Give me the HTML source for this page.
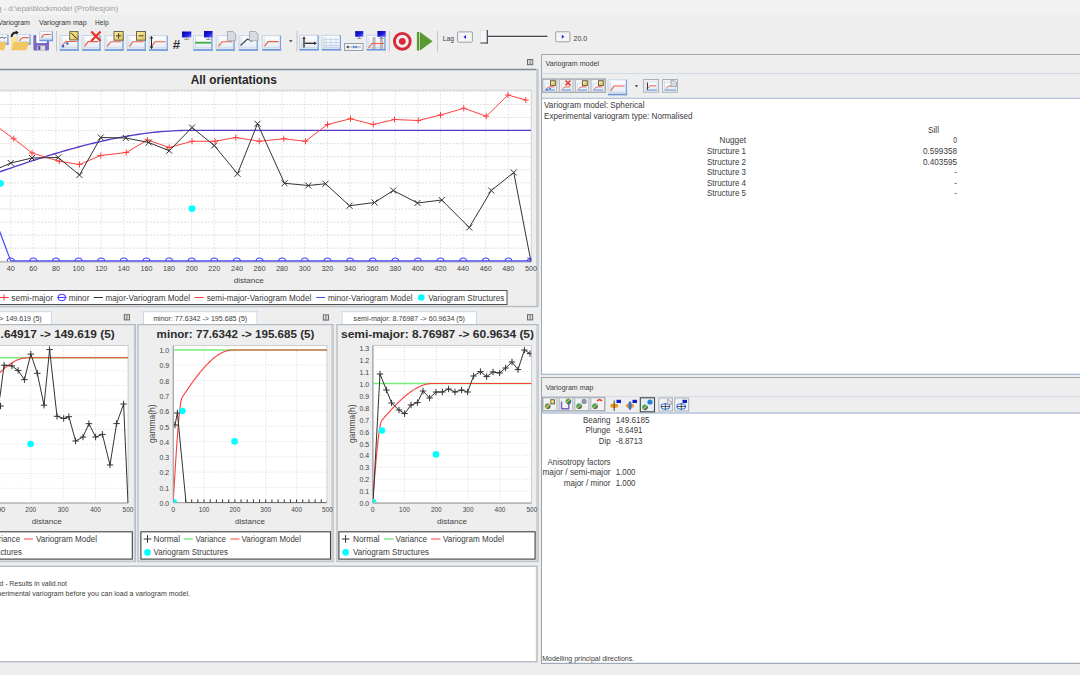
<!DOCTYPE html>
<html><head><meta charset="utf-8"><style>
html,body{margin:0;padding:0;background:#eeeeee;overflow:hidden}
svg{display:block;font-family:"Liberation Sans",sans-serif}
</style></head><body>
<svg width="1080" height="675" viewBox="0 0 1080 675">
<defs>
<linearGradient id="gbox" x1="0" y1="0" x2="0" y2="1"><stop offset="0" stop-color="#ffffff"/><stop offset="1" stop-color="#dfe8f6"/></linearGradient>
<linearGradient id="gtag" x1="0" y1="0" x2="1" y2="1"><stop offset="0" stop-color="#fff2a0"/><stop offset="1" stop-color="#e0c050"/></linearGradient>
<linearGradient id="gmon" x1="0" y1="0" x2="1" y2="1"><stop offset="0" stop-color="#0000a0"/><stop offset="0.6" stop-color="#2020e0"/><stop offset="1" stop-color="#8080ff"/></linearGradient>
<linearGradient id="gball" x1="0" y1="0" x2="1" y2="1">
<stop offset="0" stop-color="#e08040"/><stop offset="0.2" stop-color="#e08040"/><stop offset="0.2" stop-color="#30b070"/><stop offset="0.4" stop-color="#30b070"/><stop offset="0.4" stop-color="#d0a040"/><stop offset="0.6" stop-color="#d0a040"/><stop offset="0.6" stop-color="#208070"/><stop offset="0.8" stop-color="#208070"/><stop offset="0.8" stop-color="#c07050"/></linearGradient>
<clipPath id="c1"><rect x="-20" y="90.8" width="551.5" height="171"/></clipPath><clipPath id="c2"><rect x="-40" y="345.6" width="168.6" height="158"/></clipPath><clipPath id="c3"><rect x="173.6" y="345.6" width="153.4" height="157"/></clipPath><clipPath id="c4"><rect x="373" y="345.6" width="158.4" height="157"/></clipPath></defs>
<rect x="0.00" y="0.00" width="1080.00" height="675.00" fill="#eeeeee" stroke="none" stroke-width="1" />
<rect x="0.00" y="0.00" width="1080.00" height="15.00" fill="#f2f2f2" stroke="none" stroke-width="1" />
<text x="-3.00" y="10.80" font-size="8" fill="#9c9c9c" font-weight="normal" text-anchor="start" textLength="121.00" lengthAdjust="spacingAndGlyphs" >g - d:\epa\blockmodel (Profilesjoin)</text>
<text x="-2.00" y="24.80" font-size="7.4" fill="#3a3a3a" font-weight="normal" text-anchor="start" textLength="32.00" lengthAdjust="spacingAndGlyphs" >Variogram</text>
<text x="39.00" y="24.80" font-size="7.4" fill="#3a3a3a" font-weight="normal" text-anchor="start" textLength="47.60" lengthAdjust="spacingAndGlyphs" >Variogram map</text>
<text x="95.00" y="24.80" font-size="7.4" fill="#3a3a3a" font-weight="normal" text-anchor="start" textLength="13.60" lengthAdjust="spacingAndGlyphs" >Help</text>
<rect x="-11.50" y="34.70" width="19.60" height="9.40" fill="url(#gbox)" stroke="#c4d2e6" stroke-width="1" />
<line x1="-11.50" y1="43.80" x2="8.60" y2="43.80" stroke="#6c98d8" stroke-width="1.6" />
<line x1="7.80" y1="34.70" x2="7.80" y2="44.60" stroke="#7aa2dc" stroke-width="1.2" />
<line x1="-9.50" y1="36.20" x2="-9.50" y2="41.60" stroke="#c8d0dc" stroke-width="0.7" />
<line x1="-9.50" y1="41.60" x2="6.60" y2="41.60" stroke="#c8d0dc" stroke-width="0.7" />
<polyline points="0.00,38.00 2.00,37.00 4.00,38.30 6.00,37.20" fill="none" stroke="#666" stroke-width="1" stroke-linejoin="round" />
<polygon points="-10.00,42.00 6.70,42.00 4.00,50.30 -10.00,50.30" fill="#f3c665" stroke="none" stroke-width="1" />
<polygon points="11.10,36.80 17.10,36.80 17.10,50.30 11.10,50.30" fill="#fbe49a" stroke="none" stroke-width="1" />
<rect x="17.60" y="34.70" width="12.70" height="9.40" fill="url(#gbox)" stroke="#c4d2e6" stroke-width="1" />
<line x1="17.60" y1="43.80" x2="30.80" y2="43.80" stroke="#6c98d8" stroke-width="1.6" />
<line x1="30.00" y1="34.70" x2="30.00" y2="44.60" stroke="#7aa2dc" stroke-width="1.2" />
<line x1="19.60" y1="36.20" x2="19.60" y2="41.60" stroke="#c8d0dc" stroke-width="0.7" />
<line x1="19.60" y1="41.60" x2="28.80" y2="41.60" stroke="#c8d0dc" stroke-width="0.7" />
<polyline points="19.20,41.00 22.30,37.60 28.80,37.60" fill="none" stroke="#f06040" stroke-width="1.1" stroke-linejoin="round" />
<polygon points="13.00,42.00 29.00,42.00 26.50,50.30 11.60,50.30" fill="#f3c665" stroke="none" stroke-width="1" />
<path d="M11.5,37 Q12,32.5 16.5,32.5" fill="none" stroke="#222" stroke-width="2"/>
<polygon points="15.80,30.60 18.80,32.60 15.80,34.80" fill="#222" stroke="none" stroke-width="1" />
<rect x="33.40" y="35.00" width="15.60" height="15.50" fill="#7b68c0" stroke="none" stroke-width="1" rx="1"/>
<rect x="36.30" y="35.00" width="10.40" height="8.00" fill="#ffffff" stroke="none" stroke-width="1" />
<rect x="37.30" y="45.60" width="7.80" height="4.90" fill="#dcdcdc" stroke="none" stroke-width="1" />
<rect x="38.30" y="46.00" width="2.00" height="4.00" fill="#5a48a0" stroke="none" stroke-width="1" />
<rect x="39.60" y="31.60" width="13.00" height="9.10" fill="url(#gbox)" stroke="#c4d2e6" stroke-width="1" />
<line x1="39.60" y1="40.40" x2="53.10" y2="40.40" stroke="#6c98d8" stroke-width="1.6" />
<line x1="52.30" y1="31.60" x2="52.30" y2="41.20" stroke="#7aa2dc" stroke-width="1.2" />
<line x1="41.60" y1="33.10" x2="41.60" y2="38.20" stroke="#c8d0dc" stroke-width="0.7" />
<line x1="41.60" y1="38.20" x2="51.10" y2="38.20" stroke="#c8d0dc" stroke-width="0.7" />
<polyline points="41.50,37.80 44.00,34.50 51.00,34.50" fill="none" stroke="#f06040" stroke-width="1.1" stroke-linejoin="round" />
<line x1="56.50" y1="31.00" x2="56.50" y2="51.50" stroke="#c4c4c4" stroke-width="1" />
<rect x="59.90" y="35.50" width="18.40" height="14.80" fill="url(#gbox)" stroke="#c4d2e6" stroke-width="1" />
<line x1="59.90" y1="50.00" x2="78.80" y2="50.00" stroke="#6c98d8" stroke-width="1.6" />
<line x1="78.00" y1="35.50" x2="78.00" y2="50.80" stroke="#7aa2dc" stroke-width="1.2" />
<line x1="61.90" y1="37.00" x2="61.90" y2="47.80" stroke="#c8d0dc" stroke-width="0.7" />
<line x1="61.90" y1="47.80" x2="76.80" y2="47.80" stroke="#c8d0dc" stroke-width="0.7" />
<polyline points="62.20,45.60 65.80,41.50 76.70,41.50" fill="none" stroke="#f06040" stroke-width="1.1" stroke-linejoin="round" />
<circle cx="63.00" cy="46.20" r="1.20" fill="#2060d0" stroke="none" stroke-width="1" />
<circle cx="67.30" cy="43.50" r="1.20" fill="#2060d0" stroke="none" stroke-width="1" />
<rect x="69.70" y="31.60" width="8.30" height="8.30" fill="url(#gtag)" stroke="#6a6450" stroke-width="1" />
<line x1="71.00" y1="32.80" x2="76.80" y2="38.60" stroke="#222" stroke-width="1" />
<rect x="82.20" y="35.50" width="18.10" height="14.80" fill="url(#gbox)" stroke="#c4d2e6" stroke-width="1" />
<line x1="82.20" y1="50.00" x2="100.80" y2="50.00" stroke="#6c98d8" stroke-width="1.6" />
<line x1="100.00" y1="35.50" x2="100.00" y2="50.80" stroke="#7aa2dc" stroke-width="1.2" />
<line x1="84.20" y1="37.00" x2="84.20" y2="47.80" stroke="#c8d0dc" stroke-width="0.7" />
<line x1="84.20" y1="47.80" x2="98.80" y2="47.80" stroke="#c8d0dc" stroke-width="0.7" />
<polyline points="84.70,46.30 88.00,41.64 98.30,41.64" fill="none" stroke="#f06040" stroke-width="1.2" stroke-linejoin="round" />
<line x1="91.30" y1="31.60" x2="100.60" y2="41.00" stroke="#e83020" stroke-width="2.2" />
<line x1="100.60" y1="31.60" x2="91.30" y2="41.00" stroke="#e83020" stroke-width="2.2" />
<rect x="104.80" y="35.70" width="18.40" height="14.60" fill="url(#gbox)" stroke="#c4d2e6" stroke-width="1" />
<line x1="104.80" y1="50.00" x2="123.70" y2="50.00" stroke="#6c98d8" stroke-width="1.6" />
<line x1="122.90" y1="35.70" x2="122.90" y2="50.80" stroke="#7aa2dc" stroke-width="1.2" />
<line x1="106.80" y1="37.20" x2="106.80" y2="47.80" stroke="#c8d0dc" stroke-width="0.7" />
<line x1="106.80" y1="47.80" x2="121.70" y2="47.80" stroke="#c8d0dc" stroke-width="0.7" />
<polyline points="107.30,46.30 110.70,41.75 121.20,41.75" fill="none" stroke="#f06040" stroke-width="1.2" stroke-linejoin="round" />
<rect x="114.00" y="31.50" width="9.20" height="8.70" fill="url(#gtag)" stroke="#6a6450" stroke-width="1" />
<line x1="116.00" y1="35.80" x2="121.20" y2="35.80" stroke="#333" stroke-width="0.9" />
<line x1="118.60" y1="33.20" x2="118.60" y2="38.50" stroke="#333" stroke-width="0.9" />
<rect x="127.00" y="35.70" width="18.50" height="14.60" fill="url(#gbox)" stroke="#c4d2e6" stroke-width="1" />
<line x1="127.00" y1="50.00" x2="146.00" y2="50.00" stroke="#6c98d8" stroke-width="1.6" />
<line x1="145.20" y1="35.70" x2="145.20" y2="50.80" stroke="#7aa2dc" stroke-width="1.2" />
<line x1="129.00" y1="37.20" x2="129.00" y2="47.80" stroke="#c8d0dc" stroke-width="0.7" />
<line x1="129.00" y1="47.80" x2="144.00" y2="47.80" stroke="#c8d0dc" stroke-width="0.7" />
<polyline points="129.50,46.30 132.94,41.75 143.50,41.75" fill="none" stroke="#f06040" stroke-width="1.2" stroke-linejoin="round" />
<rect x="136.50" y="31.50" width="9.00" height="8.70" fill="url(#gtag)" stroke="#6a6450" stroke-width="1" />
<line x1="138.50" y1="35.80" x2="143.50" y2="35.80" stroke="#333" stroke-width="0.9" />
<rect x="149.20" y="35.70" width="18.30" height="14.60" fill="url(#gbox)" stroke="#c4d2e6" stroke-width="1" />
<line x1="149.20" y1="50.00" x2="168.00" y2="50.00" stroke="#6c98d8" stroke-width="1.6" />
<line x1="167.20" y1="35.70" x2="167.20" y2="50.80" stroke="#7aa2dc" stroke-width="1.2" />
<line x1="151.20" y1="37.20" x2="151.20" y2="47.80" stroke="#c8d0dc" stroke-width="0.7" />
<line x1="151.20" y1="47.80" x2="166.00" y2="47.80" stroke="#c8d0dc" stroke-width="0.7" />
<polyline points="151.70,46.30 155.07,41.75 165.50,41.75" fill="none" stroke="#f06040" stroke-width="1.2" stroke-linejoin="round" />
<line x1="151.50" y1="36.50" x2="151.50" y2="48.50" stroke="#222" stroke-width="1" />
<polygon points="149.80,38.50 151.50,36.00 153.20,38.50" fill="#222" stroke="none" stroke-width="1" />
<polygon points="149.80,46.50 151.50,49.00 153.20,46.50" fill="#222" stroke="none" stroke-width="1" />
<text x="172.80" y="49.20" font-size="13.5" fill="#333" font-weight="bold" text-anchor="start" textLength="7.40" lengthAdjust="spacingAndGlyphs" >#</text>
<rect x="182.00" y="31.50" width="9.30" height="5.98" fill="url(#gmon)" stroke="none" stroke-width="1" />
<line x1="186.65" y1="37.48" x2="186.65" y2="39.30" stroke="#888" stroke-width="1" />
<line x1="184.00" y1="39.30" x2="189.30" y2="39.30" stroke="#999" stroke-width="1" />
<rect x="193.50" y="35.70" width="18.60" height="14.60" fill="url(#gbox)" stroke="#c4d2e6" stroke-width="1" />
<line x1="193.50" y1="50.00" x2="212.60" y2="50.00" stroke="#6c98d8" stroke-width="1.6" />
<line x1="211.80" y1="35.70" x2="211.80" y2="50.80" stroke="#7aa2dc" stroke-width="1.2" />
<line x1="195.50" y1="37.20" x2="195.50" y2="47.80" stroke="#c8d0dc" stroke-width="0.7" />
<line x1="195.50" y1="47.80" x2="210.60" y2="47.80" stroke="#c8d0dc" stroke-width="0.7" />
<line x1="195.00" y1="42.70" x2="211.00" y2="42.70" stroke="#40b040" stroke-width="1.8" />
<rect x="204.00" y="31.00" width="8.60" height="6.48" fill="url(#gmon)" stroke="none" stroke-width="1" />
<line x1="208.30" y1="37.48" x2="208.30" y2="39.50" stroke="#888" stroke-width="1" />
<line x1="206.00" y1="39.50" x2="210.60" y2="39.50" stroke="#999" stroke-width="1" />
<rect x="216.20" y="35.70" width="18.10" height="14.60" fill="url(#gbox)" stroke="#c4d2e6" stroke-width="1" />
<line x1="216.20" y1="50.00" x2="234.80" y2="50.00" stroke="#6c98d8" stroke-width="1.6" />
<line x1="234.00" y1="35.70" x2="234.00" y2="50.80" stroke="#7aa2dc" stroke-width="1.2" />
<line x1="218.20" y1="37.20" x2="218.20" y2="47.80" stroke="#c8d0dc" stroke-width="0.7" />
<line x1="218.20" y1="47.80" x2="232.80" y2="47.80" stroke="#c8d0dc" stroke-width="0.7" />
<polyline points="218.70,46.30 222.00,41.75 232.30,41.75" fill="none" stroke="#f06040" stroke-width="1.2" stroke-linejoin="round" />
<polygon points="227.40,31.50 233.20,31.50 235.70,34.00 235.70,40.70 227.40,40.70" fill="#d8dce2" stroke="#9aa0a8" stroke-width="0.8" />
<rect x="239.00" y="35.70" width="18.50" height="14.60" fill="url(#gbox)" stroke="#c4d2e6" stroke-width="1" />
<line x1="239.00" y1="50.00" x2="258.00" y2="50.00" stroke="#6c98d8" stroke-width="1.6" />
<line x1="257.20" y1="35.70" x2="257.20" y2="50.80" stroke="#7aa2dc" stroke-width="1.2" />
<line x1="241.00" y1="37.20" x2="241.00" y2="47.80" stroke="#c8d0dc" stroke-width="0.7" />
<line x1="241.00" y1="47.80" x2="256.00" y2="47.80" stroke="#c8d0dc" stroke-width="0.7" />
<polyline points="240.50,45.50 247.50,39.00 252.00,41.50" fill="none" stroke="#444" stroke-width="1.1" stroke-linejoin="round" />
<polygon points="249.60,31.50 255.50,31.50 258.00,34.00 258.00,40.70 249.60,40.70" fill="#d8dce2" stroke="#9aa0a8" stroke-width="0.8" />
<rect x="262.20" y="35.70" width="18.50" height="14.40" fill="url(#gbox)" stroke="#c4d2e6" stroke-width="1" />
<line x1="262.20" y1="49.80" x2="281.20" y2="49.80" stroke="#6c98d8" stroke-width="1.6" />
<line x1="280.40" y1="35.70" x2="280.40" y2="50.60" stroke="#7aa2dc" stroke-width="1.2" />
<line x1="264.20" y1="37.20" x2="264.20" y2="47.60" stroke="#c8d0dc" stroke-width="0.7" />
<line x1="264.20" y1="47.60" x2="279.20" y2="47.60" stroke="#c8d0dc" stroke-width="0.7" />
<polyline points="264.70,46.10 268.13,41.67 278.70,41.67" fill="none" stroke="#f06040" stroke-width="1.2" stroke-linejoin="round" />
<polygon points="289.00,40.30 292.60,40.30 290.80,42.30" fill="#333" stroke="none" stroke-width="1" />
<line x1="297.00" y1="31.00" x2="297.00" y2="51.50" stroke="#c4c4c4" stroke-width="1" />
<rect x="299.70" y="35.30" width="18.70" height="14.70" fill="url(#gbox)" stroke="#c4d2e6" stroke-width="1" />
<line x1="299.70" y1="49.70" x2="318.90" y2="49.70" stroke="#6c98d8" stroke-width="1.6" />
<line x1="318.10" y1="35.30" x2="318.10" y2="50.50" stroke="#7aa2dc" stroke-width="1.2" />
<line x1="301.70" y1="36.80" x2="301.70" y2="47.50" stroke="#c8d0dc" stroke-width="0.7" />
<line x1="301.70" y1="47.50" x2="316.90" y2="47.50" stroke="#c8d0dc" stroke-width="0.7" />
<line x1="304.00" y1="38.00" x2="304.00" y2="47.50" stroke="#333" stroke-width="1.4" />
<polygon points="302.30,39.00 304.00,36.20 305.70,39.00" fill="#333" stroke="none" stroke-width="1" />
<line x1="305.00" y1="43.30" x2="315.00" y2="43.30" stroke="#333" stroke-width="1.4" />
<polygon points="314.00,41.60 317.00,43.30 314.00,45.00" fill="#333" stroke="none" stroke-width="1" />
<rect x="321.90" y="35.30" width="18.70" height="14.70" fill="url(#gbox)" stroke="#c4d2e6" stroke-width="1" />
<line x1="321.90" y1="49.70" x2="341.10" y2="49.70" stroke="#6c98d8" stroke-width="1.6" />
<line x1="340.30" y1="35.30" x2="340.30" y2="50.50" stroke="#7aa2dc" stroke-width="1.2" />
<line x1="323.90" y1="36.80" x2="323.90" y2="47.50" stroke="#c8d0dc" stroke-width="0.7" />
<line x1="323.90" y1="47.50" x2="339.10" y2="47.50" stroke="#c8d0dc" stroke-width="0.7" />
<line x1="326.00" y1="37.00" x2="326.00" y2="48.00" stroke="#c0d0ec" stroke-width="0.8" />
<line x1="331.00" y1="37.00" x2="331.00" y2="48.00" stroke="#c0d0ec" stroke-width="0.8" />
<line x1="336.00" y1="37.00" x2="336.00" y2="48.00" stroke="#c0d0ec" stroke-width="0.8" />
<line x1="323.00" y1="39.50" x2="339.00" y2="39.50" stroke="#c0d0ec" stroke-width="0.8" />
<line x1="323.00" y1="42.50" x2="339.00" y2="42.50" stroke="#c0d0ec" stroke-width="0.8" />
<line x1="323.00" y1="45.50" x2="339.00" y2="45.50" stroke="#c0d0ec" stroke-width="0.8" />
<rect x="344.50" y="43.50" width="18.50" height="7.00" fill="#f4f4f4" stroke="#9098a4" stroke-width="0.9" />
<line x1="346.00" y1="47.00" x2="361.00" y2="47.00" stroke="#8090a0" stroke-width="0.8" />
<polygon points="346.50,47.00 348.50,45.30 348.50,48.70" fill="#333" stroke="none" stroke-width="1" />
<polygon points="355.00,47.00 353.30,45.30 353.30,48.70" fill="#3070e0" stroke="none" stroke-width="1" />
<polygon points="355.00,47.00 356.70,45.30 356.70,48.70" fill="#3070e0" stroke="none" stroke-width="1" />
<rect x="355.20" y="31.10" width="8.10" height="5.69" fill="url(#gmon)" stroke="none" stroke-width="1" />
<line x1="359.25" y1="36.79" x2="359.25" y2="38.50" stroke="#888" stroke-width="1" />
<line x1="357.20" y1="38.50" x2="361.30" y2="38.50" stroke="#999" stroke-width="1" />
<rect x="366.80" y="35.30" width="18.40" height="14.70" fill="url(#gbox)" stroke="#c4d2e6" stroke-width="1" />
<line x1="366.80" y1="49.70" x2="385.70" y2="49.70" stroke="#6c98d8" stroke-width="1.6" />
<line x1="384.90" y1="35.30" x2="384.90" y2="50.50" stroke="#7aa2dc" stroke-width="1.2" />
<line x1="368.80" y1="36.80" x2="368.80" y2="47.50" stroke="#c8d0dc" stroke-width="0.7" />
<line x1="368.80" y1="47.50" x2="383.70" y2="47.50" stroke="#c8d0dc" stroke-width="0.7" />
<rect x="372.50" y="37.00" width="3.00" height="12.00" fill="#b8b8b8" stroke="none" stroke-width="1" />
<rect x="380.00" y="37.00" width="3.00" height="12.00" fill="#b8b8b8" stroke="none" stroke-width="1" />
<polyline points="368.50,48.00 372.00,43.50 384.00,43.50" fill="none" stroke="#f06040" stroke-width="1.1" stroke-linejoin="round" />
<rect x="377.40" y="31.00" width="8.30" height="5.76" fill="url(#gmon)" stroke="none" stroke-width="1" />
<line x1="381.55" y1="36.76" x2="381.55" y2="38.50" stroke="#888" stroke-width="1" />
<line x1="379.40" y1="38.50" x2="383.70" y2="38.50" stroke="#999" stroke-width="1" />
<line x1="389.40" y1="31.00" x2="389.40" y2="51.50" stroke="#c4c4c4" stroke-width="1" />
<circle cx="402.30" cy="41.30" r="7.90" fill="none" stroke="#d8283a" stroke-width="2.9" />
<circle cx="402.30" cy="41.30" r="3.40" fill="#d8283a" stroke="none" stroke-width="1" />
<rect x="416.90" y="32.00" width="2.40" height="18.50" fill="#5a9a34" stroke="none" stroke-width="1" />
<polygon points="420.00,32.00 432.60,41.30 420.00,50.50" fill="#5a9a34" stroke="none" stroke-width="1" />
<line x1="437.50" y1="31.00" x2="437.50" y2="51.50" stroke="#c4c4c4" stroke-width="1" />
<text x="442.80" y="40.80" font-size="8" fill="#3a3a3a" font-weight="normal" text-anchor="start" textLength="11.10" lengthAdjust="spacingAndGlyphs" >Lag</text>
<rect x="457.60" y="31.90" width="14.80" height="10.30" fill="#f5f5f5" stroke="#98a2ae" stroke-width="1" rx="1"/>
<polygon points="463.50,37.05 466.00,35.05 466.00,39.05" fill="#2020e0" stroke="none" stroke-width="1" />
<line x1="487.00" y1="36.40" x2="547.50" y2="36.40" stroke="#3e434a" stroke-width="1.3" />
<line x1="487.00" y1="37.60" x2="547.50" y2="37.60" stroke="#ffffff" stroke-width="0.8" />
<rect x="480.50" y="30.50" width="7.00" height="12.60" fill="#f6f7f9" stroke="#dde3ea" stroke-width="0.7" />
<line x1="487.30" y1="30.00" x2="487.30" y2="43.50" stroke="#444" stroke-width="1.2" />
<line x1="480.50" y1="43.00" x2="487.80" y2="43.00" stroke="#555" stroke-width="1.2" />
<rect x="555.70" y="31.80" width="14.20" height="10.00" fill="#f5f5f5" stroke="#98a2ae" stroke-width="1" rx="1"/>
<polygon points="564.30,36.80 561.80,34.80 561.80,38.80" fill="#2020e0" stroke="none" stroke-width="1" />
<text x="573.50" y="41.10" font-size="8" fill="#3a3a3a" font-weight="normal" text-anchor="start" textLength="13.70" lengthAdjust="spacingAndGlyphs" >20.0</text>
<rect x="527.50" y="59.50" width="5.20" height="5.20" fill="#dcdcdc" stroke="#6a6a6a" stroke-width="1" />
<line x1="530.10" y1="60.00" x2="530.10" y2="64.70" stroke="#6a6a6a" stroke-width="0.8" />
<line x1="0.00" y1="69.50" x2="537.00" y2="69.50" stroke="#7d8a96" stroke-width="1.4" />
<line x1="537.50" y1="69.00" x2="537.50" y2="307.00" stroke="#c4c9cf" stroke-width="2.6" />
<line x1="0.00" y1="306.50" x2="538.00" y2="306.50" stroke="#b8bec6" stroke-width="1.6" />
<text x="233.80" y="83.70" font-size="12" fill="#262626" font-weight="bold" text-anchor="middle" textLength="86.00" lengthAdjust="spacingAndGlyphs" >All orientations</text>
<rect x="-20.00" y="90.20" width="551.20" height="171.10" fill="#ffffff" stroke="#c8c8c8" stroke-width="0.8" />
<line x1="-20.00" y1="261.90" x2="531.20" y2="261.90" stroke="#b0b0b0" stroke-width="1.2" />
<line x1="-11.92" y1="90.20" x2="-11.92" y2="261.30" stroke="#d8d8d8" stroke-width="0.8" stroke-dasharray="1.8,1.6"/>
<line x1="10.70" y1="90.20" x2="10.70" y2="261.30" stroke="#d8d8d8" stroke-width="0.8" stroke-dasharray="1.8,1.6"/>
<line x1="33.32" y1="90.20" x2="33.32" y2="261.30" stroke="#d8d8d8" stroke-width="0.8" stroke-dasharray="1.8,1.6"/>
<line x1="55.94" y1="90.20" x2="55.94" y2="261.30" stroke="#d8d8d8" stroke-width="0.8" stroke-dasharray="1.8,1.6"/>
<line x1="78.56" y1="90.20" x2="78.56" y2="261.30" stroke="#d8d8d8" stroke-width="0.8" stroke-dasharray="1.8,1.6"/>
<line x1="101.18" y1="90.20" x2="101.18" y2="261.30" stroke="#d8d8d8" stroke-width="0.8" stroke-dasharray="1.8,1.6"/>
<line x1="123.80" y1="90.20" x2="123.80" y2="261.30" stroke="#d8d8d8" stroke-width="0.8" stroke-dasharray="1.8,1.6"/>
<line x1="146.42" y1="90.20" x2="146.42" y2="261.30" stroke="#d8d8d8" stroke-width="0.8" stroke-dasharray="1.8,1.6"/>
<line x1="169.04" y1="90.20" x2="169.04" y2="261.30" stroke="#d8d8d8" stroke-width="0.8" stroke-dasharray="1.8,1.6"/>
<line x1="191.66" y1="90.20" x2="191.66" y2="261.30" stroke="#d8d8d8" stroke-width="0.8" stroke-dasharray="1.8,1.6"/>
<line x1="214.28" y1="90.20" x2="214.28" y2="261.30" stroke="#d8d8d8" stroke-width="0.8" stroke-dasharray="1.8,1.6"/>
<line x1="236.90" y1="90.20" x2="236.90" y2="261.30" stroke="#d8d8d8" stroke-width="0.8" stroke-dasharray="1.8,1.6"/>
<line x1="259.52" y1="90.20" x2="259.52" y2="261.30" stroke="#d8d8d8" stroke-width="0.8" stroke-dasharray="1.8,1.6"/>
<line x1="282.14" y1="90.20" x2="282.14" y2="261.30" stroke="#d8d8d8" stroke-width="0.8" stroke-dasharray="1.8,1.6"/>
<line x1="304.76" y1="90.20" x2="304.76" y2="261.30" stroke="#d8d8d8" stroke-width="0.8" stroke-dasharray="1.8,1.6"/>
<line x1="327.38" y1="90.20" x2="327.38" y2="261.30" stroke="#d8d8d8" stroke-width="0.8" stroke-dasharray="1.8,1.6"/>
<line x1="350.00" y1="90.20" x2="350.00" y2="261.30" stroke="#d8d8d8" stroke-width="0.8" stroke-dasharray="1.8,1.6"/>
<line x1="372.62" y1="90.20" x2="372.62" y2="261.30" stroke="#d8d8d8" stroke-width="0.8" stroke-dasharray="1.8,1.6"/>
<line x1="395.24" y1="90.20" x2="395.24" y2="261.30" stroke="#d8d8d8" stroke-width="0.8" stroke-dasharray="1.8,1.6"/>
<line x1="417.86" y1="90.20" x2="417.86" y2="261.30" stroke="#d8d8d8" stroke-width="0.8" stroke-dasharray="1.8,1.6"/>
<line x1="440.48" y1="90.20" x2="440.48" y2="261.30" stroke="#d8d8d8" stroke-width="0.8" stroke-dasharray="1.8,1.6"/>
<line x1="463.10" y1="90.20" x2="463.10" y2="261.30" stroke="#d8d8d8" stroke-width="0.8" stroke-dasharray="1.8,1.6"/>
<line x1="485.72" y1="90.20" x2="485.72" y2="261.30" stroke="#d8d8d8" stroke-width="0.8" stroke-dasharray="1.8,1.6"/>
<line x1="508.34" y1="90.20" x2="508.34" y2="261.30" stroke="#d8d8d8" stroke-width="0.8" stroke-dasharray="1.8,1.6"/>
<line x1="-20.00" y1="248.23" x2="531.20" y2="248.23" stroke="#d6d6d6" stroke-width="0.8" stroke-dasharray="2,1.4"/>
<line x1="-20.00" y1="235.16" x2="531.20" y2="235.16" stroke="#d6d6d6" stroke-width="0.8" stroke-dasharray="2,1.4"/>
<line x1="-20.00" y1="222.09" x2="531.20" y2="222.09" stroke="#d6d6d6" stroke-width="0.8" stroke-dasharray="2,1.4"/>
<line x1="-20.00" y1="209.02" x2="531.20" y2="209.02" stroke="#d6d6d6" stroke-width="0.8" stroke-dasharray="2,1.4"/>
<line x1="-20.00" y1="195.95" x2="531.20" y2="195.95" stroke="#d6d6d6" stroke-width="0.8" stroke-dasharray="2,1.4"/>
<line x1="-20.00" y1="182.88" x2="531.20" y2="182.88" stroke="#d6d6d6" stroke-width="0.8" stroke-dasharray="2,1.4"/>
<line x1="-20.00" y1="169.81" x2="531.20" y2="169.81" stroke="#d6d6d6" stroke-width="0.8" stroke-dasharray="2,1.4"/>
<line x1="-20.00" y1="156.74" x2="531.20" y2="156.74" stroke="#d6d6d6" stroke-width="0.8" stroke-dasharray="2,1.4"/>
<line x1="-20.00" y1="143.67" x2="531.20" y2="143.67" stroke="#d6d6d6" stroke-width="0.8" stroke-dasharray="2,1.4"/>
<line x1="-20.00" y1="130.60" x2="531.20" y2="130.60" stroke="#d6d6d6" stroke-width="0.8" stroke-dasharray="2,1.4"/>
<line x1="-20.00" y1="117.53" x2="531.20" y2="117.53" stroke="#d6d6d6" stroke-width="0.8" stroke-dasharray="2,1.4"/>
<line x1="-20.00" y1="104.46" x2="531.20" y2="104.46" stroke="#d6d6d6" stroke-width="0.8" stroke-dasharray="2,1.4"/>
<line x1="-20.00" y1="91.39" x2="531.20" y2="91.39" stroke="#d6d6d6" stroke-width="0.8" stroke-dasharray="2,1.4"/>
<text x="10.70" y="271.30" font-size="7.2" fill="#444" font-weight="normal" text-anchor="middle" >40</text>
<text x="33.32" y="271.30" font-size="7.2" fill="#444" font-weight="normal" text-anchor="middle" >60</text>
<text x="55.94" y="271.30" font-size="7.2" fill="#444" font-weight="normal" text-anchor="middle" >80</text>
<text x="78.56" y="271.30" font-size="7.2" fill="#444" font-weight="normal" text-anchor="middle" >100</text>
<text x="101.18" y="271.30" font-size="7.2" fill="#444" font-weight="normal" text-anchor="middle" >120</text>
<text x="123.80" y="271.30" font-size="7.2" fill="#444" font-weight="normal" text-anchor="middle" >140</text>
<text x="146.42" y="271.30" font-size="7.2" fill="#444" font-weight="normal" text-anchor="middle" >160</text>
<text x="169.04" y="271.30" font-size="7.2" fill="#444" font-weight="normal" text-anchor="middle" >180</text>
<text x="191.66" y="271.30" font-size="7.2" fill="#444" font-weight="normal" text-anchor="middle" >200</text>
<text x="214.28" y="271.30" font-size="7.2" fill="#444" font-weight="normal" text-anchor="middle" >220</text>
<text x="236.90" y="271.30" font-size="7.2" fill="#444" font-weight="normal" text-anchor="middle" >240</text>
<text x="259.52" y="271.30" font-size="7.2" fill="#444" font-weight="normal" text-anchor="middle" >260</text>
<text x="282.14" y="271.30" font-size="7.2" fill="#444" font-weight="normal" text-anchor="middle" >280</text>
<text x="304.76" y="271.30" font-size="7.2" fill="#444" font-weight="normal" text-anchor="middle" >300</text>
<text x="327.38" y="271.30" font-size="7.2" fill="#444" font-weight="normal" text-anchor="middle" >320</text>
<text x="350.00" y="271.30" font-size="7.2" fill="#444" font-weight="normal" text-anchor="middle" >340</text>
<text x="372.62" y="271.30" font-size="7.2" fill="#444" font-weight="normal" text-anchor="middle" >360</text>
<text x="395.24" y="271.30" font-size="7.2" fill="#444" font-weight="normal" text-anchor="middle" >380</text>
<text x="417.86" y="271.30" font-size="7.2" fill="#444" font-weight="normal" text-anchor="middle" >400</text>
<text x="440.48" y="271.30" font-size="7.2" fill="#444" font-weight="normal" text-anchor="middle" >420</text>
<text x="463.10" y="271.30" font-size="7.2" fill="#444" font-weight="normal" text-anchor="middle" >440</text>
<text x="485.72" y="271.30" font-size="7.2" fill="#444" font-weight="normal" text-anchor="middle" >460</text>
<text x="508.34" y="271.30" font-size="7.2" fill="#444" font-weight="normal" text-anchor="middle" >480</text>
<text x="530.96" y="271.30" font-size="7.2" fill="#444" font-weight="normal" text-anchor="middle" >500</text>
<text x="248.70" y="282.50" font-size="8" fill="#444" font-weight="normal" text-anchor="middle" textLength="30.00" lengthAdjust="spacingAndGlyphs" >distance</text>
<rect x="-5.00" y="290.50" width="512.00" height="14.00" fill="#ffffff" stroke="#505050" stroke-width="1" />
<line x1="-0.50" y1="297.50" x2="8.80" y2="297.50" stroke="#ff4040" stroke-width="1.1" />
<line x1="4.00" y1="294.40" x2="4.00" y2="300.50" stroke="#ff4040" stroke-width="1.1" />
<text x="11.25" y="300.50" font-size="8.3" fill="#3a3a3a" font-weight="normal" text-anchor="start" textLength="41.75" lengthAdjust="spacingAndGlyphs" >semi-major</text>
<line x1="57.00" y1="297.50" x2="66.70" y2="297.50" stroke="#4848ff" stroke-width="1.1" />
<ellipse cx="61.80" cy="297.50" rx="3.60" ry="3.20" fill="none" stroke="#4848ff" stroke-width="1.1" />
<text x="68.75" y="300.50" font-size="8.3" fill="#3a3a3a" font-weight="normal" text-anchor="start" textLength="20.75" lengthAdjust="spacingAndGlyphs" >minor</text>
<line x1="93.75" y1="297.50" x2="103.00" y2="297.50" stroke="#333" stroke-width="1" />
<text x="105.50" y="300.50" font-size="8.3" fill="#3a3a3a" font-weight="normal" text-anchor="start" textLength="84.50" lengthAdjust="spacingAndGlyphs" >major-Variogram Model</text>
<line x1="194.50" y1="297.50" x2="203.75" y2="297.50" stroke="#ff4040" stroke-width="1" />
<text x="206.75" y="300.50" font-size="8.3" fill="#3a3a3a" font-weight="normal" text-anchor="start" textLength="104.50" lengthAdjust="spacingAndGlyphs" >semi-major-Variogram Model</text>
<line x1="316.25" y1="297.50" x2="325.00" y2="297.50" stroke="#4848ff" stroke-width="1" />
<text x="328.00" y="300.50" font-size="8.3" fill="#3a3a3a" font-weight="normal" text-anchor="start" textLength="84.50" lengthAdjust="spacingAndGlyphs" >minor-Variogram Model</text>
<circle cx="421.25" cy="297.50" r="3.30" fill="#00ffff" stroke="none" stroke-width="1" />
<text x="428.25" y="300.50" font-size="8.3" fill="#3a3a3a" font-weight="normal" text-anchor="start" textLength="76.00" lengthAdjust="spacingAndGlyphs" >Variogram Structures</text>
<g clip-path="url(#c1)">
<polyline points="-20.00,178.85 -16.06,177.45 -12.13,176.05 -8.19,174.65 -4.26,173.27 -0.32,171.88 3.61,170.51 7.55,169.14 11.49,167.79 15.42,166.44 19.36,165.11 23.29,163.78 27.23,162.47 31.16,161.18 35.10,159.90 39.04,158.63 42.97,157.38 46.91,156.14 50.84,154.93 54.78,153.73 58.71,152.55 62.65,151.40 66.59,150.26 70.52,149.15 74.46,148.06 78.39,146.99 82.33,145.95 86.26,144.93 90.20,143.95 94.14,142.98 98.07,142.05 102.01,141.15 105.94,140.27 109.88,139.43 113.81,138.62 117.75,137.84 121.69,137.10 125.62,136.38 129.56,135.71 133.49,135.07 137.43,134.47 141.36,133.90 145.30,133.38 149.24,132.89 153.17,132.45 157.11,132.04 161.04,131.68 164.98,131.36 168.91,131.09 172.85,130.86 176.79,130.67 180.72,130.54 184.66,130.45 188.59,130.40 192.53,130.40 196.46,130.40 200.40,130.40 204.34,130.40 208.27,130.40 212.21,130.40 216.14,130.40 220.08,130.40 224.01,130.40 227.95,130.40 231.89,130.40 235.82,130.40 239.76,130.40 243.69,130.40 247.63,130.40 251.56,130.40 255.50,130.40 259.44,130.40 263.37,130.40 267.31,130.40 271.24,130.40 275.18,130.40 279.11,130.40 283.05,130.40 286.99,130.40 290.92,130.40 294.86,130.40 298.79,130.40 302.73,130.40 306.66,130.40 310.60,130.40 314.54,130.40 318.47,130.40 322.41,130.40 326.34,130.40 330.28,130.40 334.21,130.40 338.15,130.40 342.09,130.40 346.02,130.40 349.96,130.40 353.89,130.40 357.83,130.40 361.76,130.40 365.70,130.40 369.64,130.40 373.57,130.40 377.51,130.40 381.44,130.40 385.38,130.40 389.31,130.40 393.25,130.40 397.19,130.40 401.12,130.40 405.06,130.40 408.99,130.40 412.93,130.40 416.86,130.40 420.80,130.40 424.74,130.40 428.67,130.40 432.61,130.40 436.54,130.40 440.48,130.40 444.41,130.40 448.35,130.40 452.29,130.40 456.22,130.40 460.16,130.40 464.09,130.40 468.03,130.40 471.96,130.40 475.90,130.40 479.84,130.40 483.77,130.40 487.71,130.40 491.64,130.40 495.58,130.40 499.51,130.40 503.45,130.40 507.39,130.40 511.32,130.40 515.26,130.40 519.19,130.40 523.13,130.40 527.06,130.40 531.00,130.40" fill="none" stroke="#5a38c8" stroke-width="1.35" stroke-linejoin="round" />
<polyline points="-11.90,120.00 13.75,138.75 32.00,153.00 59.25,161.25 79.50,164.50 100.75,155.50 126.25,152.50 147.50,140.00 169.25,147.50 192.00,141.25 215.00,141.25 235.75,137.50 259.25,141.25 283.75,138.75 305.50,141.25 327.50,124.50 350.50,118.75 373.25,124.50 394.50,119.50 418.25,120.50 440.50,115.00 463.75,108.25 486.25,116.25 508.00,95.00 525.75,100.00" fill="none" stroke="#ff4040" stroke-width="1" stroke-linejoin="round" />
<line x1="-14.90" y1="120.00" x2="-8.90" y2="120.00" stroke="#ff4040" stroke-width="1" />
<line x1="-11.90" y1="117.00" x2="-11.90" y2="123.00" stroke="#ff4040" stroke-width="1" />
<line x1="10.75" y1="138.75" x2="16.75" y2="138.75" stroke="#ff4040" stroke-width="1" />
<line x1="13.75" y1="135.75" x2="13.75" y2="141.75" stroke="#ff4040" stroke-width="1" />
<line x1="29.00" y1="153.00" x2="35.00" y2="153.00" stroke="#ff4040" stroke-width="1" />
<line x1="32.00" y1="150.00" x2="32.00" y2="156.00" stroke="#ff4040" stroke-width="1" />
<line x1="56.25" y1="161.25" x2="62.25" y2="161.25" stroke="#ff4040" stroke-width="1" />
<line x1="59.25" y1="158.25" x2="59.25" y2="164.25" stroke="#ff4040" stroke-width="1" />
<line x1="76.50" y1="164.50" x2="82.50" y2="164.50" stroke="#ff4040" stroke-width="1" />
<line x1="79.50" y1="161.50" x2="79.50" y2="167.50" stroke="#ff4040" stroke-width="1" />
<line x1="97.75" y1="155.50" x2="103.75" y2="155.50" stroke="#ff4040" stroke-width="1" />
<line x1="100.75" y1="152.50" x2="100.75" y2="158.50" stroke="#ff4040" stroke-width="1" />
<line x1="123.25" y1="152.50" x2="129.25" y2="152.50" stroke="#ff4040" stroke-width="1" />
<line x1="126.25" y1="149.50" x2="126.25" y2="155.50" stroke="#ff4040" stroke-width="1" />
<line x1="144.50" y1="140.00" x2="150.50" y2="140.00" stroke="#ff4040" stroke-width="1" />
<line x1="147.50" y1="137.00" x2="147.50" y2="143.00" stroke="#ff4040" stroke-width="1" />
<line x1="166.25" y1="147.50" x2="172.25" y2="147.50" stroke="#ff4040" stroke-width="1" />
<line x1="169.25" y1="144.50" x2="169.25" y2="150.50" stroke="#ff4040" stroke-width="1" />
<line x1="189.00" y1="141.25" x2="195.00" y2="141.25" stroke="#ff4040" stroke-width="1" />
<line x1="192.00" y1="138.25" x2="192.00" y2="144.25" stroke="#ff4040" stroke-width="1" />
<line x1="212.00" y1="141.25" x2="218.00" y2="141.25" stroke="#ff4040" stroke-width="1" />
<line x1="215.00" y1="138.25" x2="215.00" y2="144.25" stroke="#ff4040" stroke-width="1" />
<line x1="232.75" y1="137.50" x2="238.75" y2="137.50" stroke="#ff4040" stroke-width="1" />
<line x1="235.75" y1="134.50" x2="235.75" y2="140.50" stroke="#ff4040" stroke-width="1" />
<line x1="256.25" y1="141.25" x2="262.25" y2="141.25" stroke="#ff4040" stroke-width="1" />
<line x1="259.25" y1="138.25" x2="259.25" y2="144.25" stroke="#ff4040" stroke-width="1" />
<line x1="280.75" y1="138.75" x2="286.75" y2="138.75" stroke="#ff4040" stroke-width="1" />
<line x1="283.75" y1="135.75" x2="283.75" y2="141.75" stroke="#ff4040" stroke-width="1" />
<line x1="302.50" y1="141.25" x2="308.50" y2="141.25" stroke="#ff4040" stroke-width="1" />
<line x1="305.50" y1="138.25" x2="305.50" y2="144.25" stroke="#ff4040" stroke-width="1" />
<line x1="324.50" y1="124.50" x2="330.50" y2="124.50" stroke="#ff4040" stroke-width="1" />
<line x1="327.50" y1="121.50" x2="327.50" y2="127.50" stroke="#ff4040" stroke-width="1" />
<line x1="347.50" y1="118.75" x2="353.50" y2="118.75" stroke="#ff4040" stroke-width="1" />
<line x1="350.50" y1="115.75" x2="350.50" y2="121.75" stroke="#ff4040" stroke-width="1" />
<line x1="370.25" y1="124.50" x2="376.25" y2="124.50" stroke="#ff4040" stroke-width="1" />
<line x1="373.25" y1="121.50" x2="373.25" y2="127.50" stroke="#ff4040" stroke-width="1" />
<line x1="391.50" y1="119.50" x2="397.50" y2="119.50" stroke="#ff4040" stroke-width="1" />
<line x1="394.50" y1="116.50" x2="394.50" y2="122.50" stroke="#ff4040" stroke-width="1" />
<line x1="415.25" y1="120.50" x2="421.25" y2="120.50" stroke="#ff4040" stroke-width="1" />
<line x1="418.25" y1="117.50" x2="418.25" y2="123.50" stroke="#ff4040" stroke-width="1" />
<line x1="437.50" y1="115.00" x2="443.50" y2="115.00" stroke="#ff4040" stroke-width="1" />
<line x1="440.50" y1="112.00" x2="440.50" y2="118.00" stroke="#ff4040" stroke-width="1" />
<line x1="460.75" y1="108.25" x2="466.75" y2="108.25" stroke="#ff4040" stroke-width="1" />
<line x1="463.75" y1="105.25" x2="463.75" y2="111.25" stroke="#ff4040" stroke-width="1" />
<line x1="483.25" y1="116.25" x2="489.25" y2="116.25" stroke="#ff4040" stroke-width="1" />
<line x1="486.25" y1="113.25" x2="486.25" y2="119.25" stroke="#ff4040" stroke-width="1" />
<line x1="505.00" y1="95.00" x2="511.00" y2="95.00" stroke="#ff4040" stroke-width="1" />
<line x1="508.00" y1="92.00" x2="508.00" y2="98.00" stroke="#ff4040" stroke-width="1" />
<line x1="522.75" y1="100.00" x2="528.75" y2="100.00" stroke="#ff4040" stroke-width="1" />
<line x1="525.75" y1="97.00" x2="525.75" y2="103.00" stroke="#ff4040" stroke-width="1" />
<polyline points="-12.00,173.00 10.75,163.00 32.00,158.00 58.25,157.50 79.50,175.00 100.75,137.50 125.75,138.00 148.75,142.50 169.25,150.75 192.00,127.50 214.25,145.50 237.50,173.75 257.50,123.75 284.50,183.25 308.25,185.50 325.50,183.75 349.50,205.75 374.50,202.50 393.25,190.50 417.50,203.00 441.75,200.00 469.25,227.50 491.25,190.50 513.75,172.50 530.75,260.50" fill="none" stroke="#333" stroke-width="1" stroke-linejoin="round" />
<line x1="-15.00" y1="170.00" x2="-9.00" y2="176.00" stroke="#333" stroke-width="1" />
<line x1="-15.00" y1="176.00" x2="-9.00" y2="170.00" stroke="#333" stroke-width="1" />
<line x1="7.75" y1="160.00" x2="13.75" y2="166.00" stroke="#333" stroke-width="1" />
<line x1="7.75" y1="166.00" x2="13.75" y2="160.00" stroke="#333" stroke-width="1" />
<line x1="29.00" y1="155.00" x2="35.00" y2="161.00" stroke="#333" stroke-width="1" />
<line x1="29.00" y1="161.00" x2="35.00" y2="155.00" stroke="#333" stroke-width="1" />
<line x1="55.25" y1="154.50" x2="61.25" y2="160.50" stroke="#333" stroke-width="1" />
<line x1="55.25" y1="160.50" x2="61.25" y2="154.50" stroke="#333" stroke-width="1" />
<line x1="76.50" y1="172.00" x2="82.50" y2="178.00" stroke="#333" stroke-width="1" />
<line x1="76.50" y1="178.00" x2="82.50" y2="172.00" stroke="#333" stroke-width="1" />
<line x1="97.75" y1="134.50" x2="103.75" y2="140.50" stroke="#333" stroke-width="1" />
<line x1="97.75" y1="140.50" x2="103.75" y2="134.50" stroke="#333" stroke-width="1" />
<line x1="122.75" y1="135.00" x2="128.75" y2="141.00" stroke="#333" stroke-width="1" />
<line x1="122.75" y1="141.00" x2="128.75" y2="135.00" stroke="#333" stroke-width="1" />
<line x1="145.75" y1="139.50" x2="151.75" y2="145.50" stroke="#333" stroke-width="1" />
<line x1="145.75" y1="145.50" x2="151.75" y2="139.50" stroke="#333" stroke-width="1" />
<line x1="166.25" y1="147.75" x2="172.25" y2="153.75" stroke="#333" stroke-width="1" />
<line x1="166.25" y1="153.75" x2="172.25" y2="147.75" stroke="#333" stroke-width="1" />
<line x1="189.00" y1="124.50" x2="195.00" y2="130.50" stroke="#333" stroke-width="1" />
<line x1="189.00" y1="130.50" x2="195.00" y2="124.50" stroke="#333" stroke-width="1" />
<line x1="211.25" y1="142.50" x2="217.25" y2="148.50" stroke="#333" stroke-width="1" />
<line x1="211.25" y1="148.50" x2="217.25" y2="142.50" stroke="#333" stroke-width="1" />
<line x1="234.50" y1="170.75" x2="240.50" y2="176.75" stroke="#333" stroke-width="1" />
<line x1="234.50" y1="176.75" x2="240.50" y2="170.75" stroke="#333" stroke-width="1" />
<line x1="254.50" y1="120.75" x2="260.50" y2="126.75" stroke="#333" stroke-width="1" />
<line x1="254.50" y1="126.75" x2="260.50" y2="120.75" stroke="#333" stroke-width="1" />
<line x1="281.50" y1="180.25" x2="287.50" y2="186.25" stroke="#333" stroke-width="1" />
<line x1="281.50" y1="186.25" x2="287.50" y2="180.25" stroke="#333" stroke-width="1" />
<line x1="305.25" y1="182.50" x2="311.25" y2="188.50" stroke="#333" stroke-width="1" />
<line x1="305.25" y1="188.50" x2="311.25" y2="182.50" stroke="#333" stroke-width="1" />
<line x1="322.50" y1="180.75" x2="328.50" y2="186.75" stroke="#333" stroke-width="1" />
<line x1="322.50" y1="186.75" x2="328.50" y2="180.75" stroke="#333" stroke-width="1" />
<line x1="346.50" y1="202.75" x2="352.50" y2="208.75" stroke="#333" stroke-width="1" />
<line x1="346.50" y1="208.75" x2="352.50" y2="202.75" stroke="#333" stroke-width="1" />
<line x1="371.50" y1="199.50" x2="377.50" y2="205.50" stroke="#333" stroke-width="1" />
<line x1="371.50" y1="205.50" x2="377.50" y2="199.50" stroke="#333" stroke-width="1" />
<line x1="390.25" y1="187.50" x2="396.25" y2="193.50" stroke="#333" stroke-width="1" />
<line x1="390.25" y1="193.50" x2="396.25" y2="187.50" stroke="#333" stroke-width="1" />
<line x1="414.50" y1="200.00" x2="420.50" y2="206.00" stroke="#333" stroke-width="1" />
<line x1="414.50" y1="206.00" x2="420.50" y2="200.00" stroke="#333" stroke-width="1" />
<line x1="438.75" y1="197.00" x2="444.75" y2="203.00" stroke="#333" stroke-width="1" />
<line x1="438.75" y1="203.00" x2="444.75" y2="197.00" stroke="#333" stroke-width="1" />
<line x1="466.25" y1="224.50" x2="472.25" y2="230.50" stroke="#333" stroke-width="1" />
<line x1="466.25" y1="230.50" x2="472.25" y2="224.50" stroke="#333" stroke-width="1" />
<line x1="488.25" y1="187.50" x2="494.25" y2="193.50" stroke="#333" stroke-width="1" />
<line x1="488.25" y1="193.50" x2="494.25" y2="187.50" stroke="#333" stroke-width="1" />
<line x1="510.75" y1="169.50" x2="516.75" y2="175.50" stroke="#333" stroke-width="1" />
<line x1="510.75" y1="175.50" x2="516.75" y2="169.50" stroke="#333" stroke-width="1" />
<line x1="527.75" y1="257.50" x2="533.75" y2="263.50" stroke="#333" stroke-width="1" />
<line x1="527.75" y1="263.50" x2="533.75" y2="257.50" stroke="#333" stroke-width="1" />
<polyline points="-12.00,200.00 10.75,261.00" fill="none" stroke="#4848ff" stroke-width="1.2" stroke-linejoin="round" />
<line x1="10.75" y1="261.00" x2="531.00" y2="261.00" stroke="#4848ff" stroke-width="1.3" />
<path d="M7.30,261 a3.4,3 0 0 1 6.8,0" fill="none" stroke="#4848ff" stroke-width="1.2"/>
<path d="M29.92,261 a3.4,3 0 0 1 6.8,0" fill="none" stroke="#4848ff" stroke-width="1.2"/>
<path d="M52.54,261 a3.4,3 0 0 1 6.8,0" fill="none" stroke="#4848ff" stroke-width="1.2"/>
<path d="M75.16,261 a3.4,3 0 0 1 6.8,0" fill="none" stroke="#4848ff" stroke-width="1.2"/>
<path d="M97.78,261 a3.4,3 0 0 1 6.8,0" fill="none" stroke="#4848ff" stroke-width="1.2"/>
<path d="M120.40,261 a3.4,3 0 0 1 6.8,0" fill="none" stroke="#4848ff" stroke-width="1.2"/>
<path d="M143.02,261 a3.4,3 0 0 1 6.8,0" fill="none" stroke="#4848ff" stroke-width="1.2"/>
<path d="M165.64,261 a3.4,3 0 0 1 6.8,0" fill="none" stroke="#4848ff" stroke-width="1.2"/>
<path d="M188.26,261 a3.4,3 0 0 1 6.8,0" fill="none" stroke="#4848ff" stroke-width="1.2"/>
<path d="M210.88,261 a3.4,3 0 0 1 6.8,0" fill="none" stroke="#4848ff" stroke-width="1.2"/>
<path d="M233.50,261 a3.4,3 0 0 1 6.8,0" fill="none" stroke="#4848ff" stroke-width="1.2"/>
<path d="M256.12,261 a3.4,3 0 0 1 6.8,0" fill="none" stroke="#4848ff" stroke-width="1.2"/>
<path d="M278.74,261 a3.4,3 0 0 1 6.8,0" fill="none" stroke="#4848ff" stroke-width="1.2"/>
<path d="M301.36,261 a3.4,3 0 0 1 6.8,0" fill="none" stroke="#4848ff" stroke-width="1.2"/>
<path d="M323.98,261 a3.4,3 0 0 1 6.8,0" fill="none" stroke="#4848ff" stroke-width="1.2"/>
<path d="M346.60,261 a3.4,3 0 0 1 6.8,0" fill="none" stroke="#4848ff" stroke-width="1.2"/>
<path d="M369.22,261 a3.4,3 0 0 1 6.8,0" fill="none" stroke="#4848ff" stroke-width="1.2"/>
<path d="M391.84,261 a3.4,3 0 0 1 6.8,0" fill="none" stroke="#4848ff" stroke-width="1.2"/>
<path d="M414.46,261 a3.4,3 0 0 1 6.8,0" fill="none" stroke="#4848ff" stroke-width="1.2"/>
<path d="M437.08,261 a3.4,3 0 0 1 6.8,0" fill="none" stroke="#4848ff" stroke-width="1.2"/>
<path d="M459.70,261 a3.4,3 0 0 1 6.8,0" fill="none" stroke="#4848ff" stroke-width="1.2"/>
<path d="M482.32,261 a3.4,3 0 0 1 6.8,0" fill="none" stroke="#4848ff" stroke-width="1.2"/>
<path d="M504.94,261 a3.4,3 0 0 1 6.8,0" fill="none" stroke="#4848ff" stroke-width="1.2"/>
<path d="M527.56,261 a3.4,3 0 0 1 6.8,0" fill="none" stroke="#4848ff" stroke-width="1.2"/>
<circle cx="0.50" cy="183.30" r="3.40" fill="#00ffff" stroke="none" stroke-width="1" />
<circle cx="192.00" cy="208.60" r="3.40" fill="#00ffff" stroke="none" stroke-width="1" />
</g>
<rect x="-62.50" y="311.20" width="114.40" height="13.00" fill="#ffffff" stroke="none" stroke-width="1" />
<line x1="-62.00" y1="311.20" x2="-62.00" y2="324.30" stroke="#c8d6e8" stroke-width="1" />
<line x1="51.40" y1="311.20" x2="51.40" y2="324.30" stroke="#c8d6e8" stroke-width="1" />
<line x1="-62.50" y1="311.70" x2="51.90" y2="311.70" stroke="#c8d6e8" stroke-width="1" />
<text x="-5.30" y="320.80" font-size="7.6" fill="#3a3a3a" font-weight="normal" text-anchor="middle" textLength="94.00" lengthAdjust="spacingAndGlyphs" >major: 4.64917 -&gt; 149.619 (5)</text>
<rect x="124.30" y="314.70" width="5.20" height="5.20" fill="#dcdcdc" stroke="#6a6a6a" stroke-width="1" />
<line x1="126.90" y1="315.20" x2="126.90" y2="319.90" stroke="#6a6a6a" stroke-width="0.8" />
<rect x="-9.50" y="324.60" width="145.00" height="237.00" fill="none" stroke="#b0b8c2" stroke-width="1.2" />
<line x1="134.50" y1="325.00" x2="134.50" y2="561.00" stroke="#c8ced6" stroke-width="1.5" />
<line x1="-10.00" y1="561.20" x2="136.00" y2="561.20" stroke="#c0c6ce" stroke-width="1.4" />
<text x="0.60" y="338.40" font-size="11.6" fill="#2c2c2c" font-weight="bold" text-anchor="start" textLength="114.10" lengthAdjust="spacingAndGlyphs" >.64917 -&gt; 149.619 (5)</text>
<rect x="-40.00" y="345.60" width="168.10" height="157.40" fill="#ffffff" stroke="#c4c4c4" stroke-width="0.8" />
<line x1="-40.00" y1="503.00" x2="128.10" y2="503.00" stroke="#a8a8a8" stroke-width="1.2" />
<line x1="-1.68" y1="345.60" x2="-1.68" y2="503.00" stroke="#d8d8d8" stroke-width="0.8" stroke-dasharray="1.1,1.6"/>
<line x1="30.74" y1="345.60" x2="30.74" y2="503.00" stroke="#d8d8d8" stroke-width="0.8" stroke-dasharray="1.1,1.6"/>
<line x1="63.16" y1="345.60" x2="63.16" y2="503.00" stroke="#d8d8d8" stroke-width="0.8" stroke-dasharray="1.1,1.6"/>
<line x1="95.58" y1="345.60" x2="95.58" y2="503.00" stroke="#d8d8d8" stroke-width="0.8" stroke-dasharray="1.1,1.6"/>
<line x1="-40.00" y1="488.30" x2="128.10" y2="488.30" stroke="#d8d8d8" stroke-width="0.8" stroke-dasharray="1.1,1.6"/>
<line x1="-40.00" y1="473.60" x2="128.10" y2="473.60" stroke="#d8d8d8" stroke-width="0.8" stroke-dasharray="1.1,1.6"/>
<line x1="-40.00" y1="458.90" x2="128.10" y2="458.90" stroke="#d8d8d8" stroke-width="0.8" stroke-dasharray="1.1,1.6"/>
<line x1="-40.00" y1="444.20" x2="128.10" y2="444.20" stroke="#d8d8d8" stroke-width="0.8" stroke-dasharray="1.1,1.6"/>
<line x1="-40.00" y1="429.50" x2="128.10" y2="429.50" stroke="#d8d8d8" stroke-width="0.8" stroke-dasharray="1.1,1.6"/>
<line x1="-40.00" y1="414.80" x2="128.10" y2="414.80" stroke="#d8d8d8" stroke-width="0.8" stroke-dasharray="1.1,1.6"/>
<line x1="-40.00" y1="400.10" x2="128.10" y2="400.10" stroke="#d8d8d8" stroke-width="0.8" stroke-dasharray="1.1,1.6"/>
<line x1="-40.00" y1="385.40" x2="128.10" y2="385.40" stroke="#d8d8d8" stroke-width="0.8" stroke-dasharray="1.1,1.6"/>
<line x1="-40.00" y1="370.70" x2="128.10" y2="370.70" stroke="#d8d8d8" stroke-width="0.8" stroke-dasharray="1.1,1.6"/>
<line x1="-40.00" y1="356.00" x2="128.10" y2="356.00" stroke="#d8d8d8" stroke-width="0.8" stroke-dasharray="1.1,1.6"/>
<text x="30.74" y="511.90" font-size="7.6" fill="#444" font-weight="normal" text-anchor="middle" textLength="10.80" lengthAdjust="spacingAndGlyphs" >200</text>
<text x="63.16" y="511.90" font-size="7.6" fill="#444" font-weight="normal" text-anchor="middle" textLength="10.80" lengthAdjust="spacingAndGlyphs" >300</text>
<text x="95.58" y="511.90" font-size="7.6" fill="#444" font-weight="normal" text-anchor="middle" textLength="10.80" lengthAdjust="spacingAndGlyphs" >400</text>
<text x="128.00" y="511.90" font-size="7.6" fill="#444" font-weight="normal" text-anchor="middle" textLength="10.80" lengthAdjust="spacingAndGlyphs" >500</text>
<text x="-1.00" y="511.90" font-size="7.6" fill="#444" font-weight="normal" text-anchor="middle" >100</text>
<text x="46.80" y="523.60" font-size="8" fill="#444" font-weight="normal" text-anchor="middle" textLength="30.00" lengthAdjust="spacingAndGlyphs" >distance</text>
<g clip-path="url(#c2)">
<line x1="-40.00" y1="357.80" x2="128.10" y2="357.80" stroke="#77ee77" stroke-width="1.6" />
<polyline points="-34.10,503.00 -33.09,487.53 -32.07,472.39 -31.06,457.90 -30.05,444.41 -29.03,432.22 -28.02,421.68 -27.00,413.10 -25.99,406.83 -24.98,403.18 -23.96,401.67 -22.95,400.28 -21.94,398.90 -20.92,397.53 -19.91,396.16 -18.89,394.81 -17.88,393.47 -16.87,392.14 -15.85,390.83 -14.84,389.53 -13.83,388.24 -12.81,386.97 -11.80,385.72 -10.78,384.48 -9.77,383.26 -8.76,382.06 -7.74,380.88 -6.73,379.72 -5.72,378.58 -4.70,377.46 -3.69,376.36 -2.67,375.29 -1.66,374.24 -0.65,373.22 0.37,372.22 1.38,371.25 2.39,370.30 3.41,369.39 4.42,368.50 5.44,367.64 6.45,366.81 7.46,366.02 8.48,365.25 9.49,364.52 10.50,363.82 11.52,363.16 12.53,362.53 13.55,361.93 14.56,361.37 15.57,360.85 16.59,360.37 17.60,359.93 18.61,359.52 19.63,359.16 20.64,358.84 21.66,358.56 22.67,358.32 23.68,358.13 24.70,357.98 25.71,357.87 26.72,357.81 27.74,357.80 28.75,357.80 29.77,357.80 30.78,357.80 31.79,357.80 32.81,357.80 33.82,357.80 34.84,357.80 35.85,357.80 36.86,357.80 37.88,357.80 38.89,357.80 39.90,357.80 40.92,357.80 41.93,357.80 42.94,357.80 43.96,357.80 44.97,357.80 45.99,357.80 47.00,357.80 48.01,357.80 49.03,357.80 50.04,357.80 51.05,357.80 52.07,357.80 53.08,357.80 54.10,357.80 55.11,357.80 56.12,357.80 57.14,357.80 58.15,357.80 59.16,357.80 60.18,357.80 61.19,357.80 62.21,357.80 63.22,357.80 64.23,357.80 65.25,357.80 66.26,357.80 67.28,357.80 68.29,357.80 69.30,357.80 70.32,357.80 71.33,357.80 72.34,357.80 73.36,357.80 74.37,357.80 75.38,357.80 76.40,357.80 77.41,357.80 78.43,357.80 79.44,357.80 80.45,357.80 81.47,357.80 82.48,357.80 83.50,357.80 84.51,357.80 85.52,357.80 86.54,357.80 87.55,357.80 88.56,357.80 89.58,357.80 90.59,357.80 91.60,357.80 92.62,357.80 93.63,357.80 94.65,357.80 95.66,357.80 96.67,357.80 97.69,357.80 98.70,357.80 99.72,357.80 100.73,357.80 101.74,357.80 102.76,357.80 103.77,357.80 104.78,357.80 105.80,357.80 106.81,357.80 107.82,357.80 108.84,357.80 109.85,357.80 110.87,357.80 111.88,357.80 112.89,357.80 113.91,357.80 114.92,357.80 115.94,357.80 116.95,357.80 117.96,357.80 118.98,357.80 119.99,357.80 121.00,357.80 122.02,357.80 123.03,357.80 124.04,357.80 125.06,357.80 126.07,357.80 127.09,357.80 128.10,357.80" fill="none" stroke="#ff3a3a" stroke-width="1.1" stroke-linejoin="round" />
<polyline points="-10.00,470.00 -6.00,420.00 0.00,396.30 4.10,365.20 11.90,365.90 18.10,370.40 24.40,379.70 30.80,354.10 37.30,373.30 44.00,405.20 49.60,349.60 57.00,416.30 63.70,418.50 68.90,416.70 75.60,441.00 83.00,437.00 88.90,423.70 95.60,437.00 102.40,434.40 110.00,465.00 116.60,423.60 123.60,404.00 128.00,503.00" fill="none" stroke="#333" stroke-width="1" stroke-linejoin="round" />
<line x1="0.90" y1="365.20" x2="7.30" y2="365.20" stroke="#333" stroke-width="1" />
<line x1="4.10" y1="362.00" x2="4.10" y2="368.40" stroke="#333" stroke-width="1" />
<line x1="8.70" y1="365.90" x2="15.10" y2="365.90" stroke="#333" stroke-width="1" />
<line x1="11.90" y1="362.70" x2="11.90" y2="369.10" stroke="#333" stroke-width="1" />
<line x1="14.90" y1="370.40" x2="21.30" y2="370.40" stroke="#333" stroke-width="1" />
<line x1="18.10" y1="367.20" x2="18.10" y2="373.60" stroke="#333" stroke-width="1" />
<line x1="21.20" y1="379.70" x2="27.60" y2="379.70" stroke="#333" stroke-width="1" />
<line x1="24.40" y1="376.50" x2="24.40" y2="382.90" stroke="#333" stroke-width="1" />
<line x1="27.60" y1="354.10" x2="34.00" y2="354.10" stroke="#333" stroke-width="1" />
<line x1="30.80" y1="350.90" x2="30.80" y2="357.30" stroke="#333" stroke-width="1" />
<line x1="34.10" y1="373.30" x2="40.50" y2="373.30" stroke="#333" stroke-width="1" />
<line x1="37.30" y1="370.10" x2="37.30" y2="376.50" stroke="#333" stroke-width="1" />
<line x1="40.80" y1="405.20" x2="47.20" y2="405.20" stroke="#333" stroke-width="1" />
<line x1="44.00" y1="402.00" x2="44.00" y2="408.40" stroke="#333" stroke-width="1" />
<line x1="46.40" y1="349.60" x2="52.80" y2="349.60" stroke="#333" stroke-width="1" />
<line x1="49.60" y1="346.40" x2="49.60" y2="352.80" stroke="#333" stroke-width="1" />
<line x1="53.80" y1="416.30" x2="60.20" y2="416.30" stroke="#333" stroke-width="1" />
<line x1="57.00" y1="413.10" x2="57.00" y2="419.50" stroke="#333" stroke-width="1" />
<line x1="60.50" y1="418.50" x2="66.90" y2="418.50" stroke="#333" stroke-width="1" />
<line x1="63.70" y1="415.30" x2="63.70" y2="421.70" stroke="#333" stroke-width="1" />
<line x1="65.70" y1="416.70" x2="72.10" y2="416.70" stroke="#333" stroke-width="1" />
<line x1="68.90" y1="413.50" x2="68.90" y2="419.90" stroke="#333" stroke-width="1" />
<line x1="72.40" y1="441.00" x2="78.80" y2="441.00" stroke="#333" stroke-width="1" />
<line x1="75.60" y1="437.80" x2="75.60" y2="444.20" stroke="#333" stroke-width="1" />
<line x1="79.80" y1="437.00" x2="86.20" y2="437.00" stroke="#333" stroke-width="1" />
<line x1="83.00" y1="433.80" x2="83.00" y2="440.20" stroke="#333" stroke-width="1" />
<line x1="85.70" y1="423.70" x2="92.10" y2="423.70" stroke="#333" stroke-width="1" />
<line x1="88.90" y1="420.50" x2="88.90" y2="426.90" stroke="#333" stroke-width="1" />
<line x1="92.40" y1="437.00" x2="98.80" y2="437.00" stroke="#333" stroke-width="1" />
<line x1="95.60" y1="433.80" x2="95.60" y2="440.20" stroke="#333" stroke-width="1" />
<line x1="99.20" y1="434.40" x2="105.60" y2="434.40" stroke="#333" stroke-width="1" />
<line x1="102.40" y1="431.20" x2="102.40" y2="437.60" stroke="#333" stroke-width="1" />
<line x1="106.80" y1="465.00" x2="113.20" y2="465.00" stroke="#333" stroke-width="1" />
<line x1="110.00" y1="461.80" x2="110.00" y2="468.20" stroke="#333" stroke-width="1" />
<line x1="113.40" y1="423.60" x2="119.80" y2="423.60" stroke="#333" stroke-width="1" />
<line x1="116.60" y1="420.40" x2="116.60" y2="426.80" stroke="#333" stroke-width="1" />
<line x1="120.40" y1="404.00" x2="126.80" y2="404.00" stroke="#333" stroke-width="1" />
<line x1="123.60" y1="400.80" x2="123.60" y2="407.20" stroke="#333" stroke-width="1" />
<line x1="-2.70" y1="406.00" x2="3.70" y2="406.00" stroke="#333" stroke-width="1" />
<line x1="0.50" y1="402.80" x2="0.50" y2="409.20" stroke="#333" stroke-width="1" />
<circle cx="30.60" cy="444.00" r="3.30" fill="#00ffff" stroke="none" stroke-width="1" />
</g>
<rect x="-9.50" y="531.80" width="141.80" height="27.30" fill="#ffffff" stroke="#404040" stroke-width="1.1" />
<text x="-10.40" y="541.80" font-size="8.3" fill="#3a3a3a" font-weight="normal" text-anchor="start" textLength="30.40" lengthAdjust="spacingAndGlyphs" >Variance</text>
<line x1="24.00" y1="539.00" x2="33.00" y2="539.00" stroke="#ff4040" stroke-width="1" />
<text x="36.00" y="541.80" font-size="8.3" fill="#3a3a3a" font-weight="normal" text-anchor="start" textLength="61.00" lengthAdjust="spacingAndGlyphs" >Variogram Model</text>
<text x="-52.40" y="555.20" font-size="8.3" fill="#3a3a3a" font-weight="normal" text-anchor="start" textLength="74.40" lengthAdjust="spacingAndGlyphs" >Variogram Structures</text>
<rect x="143.00" y="311.20" width="114.40" height="13.00" fill="#ffffff" stroke="none" stroke-width="1" />
<line x1="143.50" y1="311.20" x2="143.50" y2="324.30" stroke="#c8d6e8" stroke-width="1" />
<line x1="256.90" y1="311.20" x2="256.90" y2="324.30" stroke="#c8d6e8" stroke-width="1" />
<line x1="143.00" y1="311.70" x2="257.40" y2="311.70" stroke="#c8d6e8" stroke-width="1" />
<text x="200.20" y="320.80" font-size="7.6" fill="#3a3a3a" font-weight="normal" text-anchor="middle" textLength="94.00" lengthAdjust="spacingAndGlyphs" >minor: 77.6342 -&gt; 195.685 (5)</text>
<rect x="323.30" y="314.90" width="5.20" height="5.20" fill="#dcdcdc" stroke="#6a6a6a" stroke-width="1" />
<line x1="325.90" y1="315.40" x2="325.90" y2="320.10" stroke="#6a6a6a" stroke-width="0.8" />
<rect x="138.00" y="324.60" width="195.00" height="237.00" fill="none" stroke="#b0b8c2" stroke-width="1.2" />
<line x1="332.00" y1="325.00" x2="332.00" y2="561.00" stroke="#c8ced6" stroke-width="1.5" />
<line x1="137.50" y1="561.20" x2="333.50" y2="561.20" stroke="#c0c6ce" stroke-width="1.4" />
<text x="235.50" y="338.40" font-size="11.6" fill="#2c2c2c" font-weight="bold" text-anchor="middle" textLength="157.80" lengthAdjust="spacingAndGlyphs" >minor: 77.6342 -&gt; 195.685 (5)</text>
<rect x="173.60" y="345.60" width="153.40" height="157.00" fill="#ffffff" stroke="#c4c4c4" stroke-width="0.8" />
<line x1="173.30" y1="345.60" x2="173.30" y2="502.60" stroke="#a8a8a8" stroke-width="1.3" />
<line x1="173.60" y1="502.60" x2="327.00" y2="502.60" stroke="#a8a8a8" stroke-width="1.2" />
<line x1="204.05" y1="345.60" x2="204.05" y2="502.60" stroke="#d8d8d8" stroke-width="0.8" stroke-dasharray="1.1,1.6"/>
<line x1="234.90" y1="345.60" x2="234.90" y2="502.60" stroke="#d8d8d8" stroke-width="0.8" stroke-dasharray="1.1,1.6"/>
<line x1="265.75" y1="345.60" x2="265.75" y2="502.60" stroke="#d8d8d8" stroke-width="0.8" stroke-dasharray="1.1,1.6"/>
<line x1="296.60" y1="345.60" x2="296.60" y2="502.60" stroke="#d8d8d8" stroke-width="0.8" stroke-dasharray="1.1,1.6"/>
<line x1="173.60" y1="487.34" x2="327.00" y2="487.34" stroke="#d8d8d8" stroke-width="0.8" stroke-dasharray="1.1,1.6"/>
<line x1="173.60" y1="472.08" x2="327.00" y2="472.08" stroke="#d8d8d8" stroke-width="0.8" stroke-dasharray="1.1,1.6"/>
<line x1="173.60" y1="456.82" x2="327.00" y2="456.82" stroke="#d8d8d8" stroke-width="0.8" stroke-dasharray="1.1,1.6"/>
<line x1="173.60" y1="441.56" x2="327.00" y2="441.56" stroke="#d8d8d8" stroke-width="0.8" stroke-dasharray="1.1,1.6"/>
<line x1="173.60" y1="426.30" x2="327.00" y2="426.30" stroke="#d8d8d8" stroke-width="0.8" stroke-dasharray="1.1,1.6"/>
<line x1="173.60" y1="411.04" x2="327.00" y2="411.04" stroke="#d8d8d8" stroke-width="0.8" stroke-dasharray="1.1,1.6"/>
<line x1="173.60" y1="395.78" x2="327.00" y2="395.78" stroke="#d8d8d8" stroke-width="0.8" stroke-dasharray="1.1,1.6"/>
<line x1="173.60" y1="380.52" x2="327.00" y2="380.52" stroke="#d8d8d8" stroke-width="0.8" stroke-dasharray="1.1,1.6"/>
<line x1="173.60" y1="365.26" x2="327.00" y2="365.26" stroke="#d8d8d8" stroke-width="0.8" stroke-dasharray="1.1,1.6"/>
<line x1="173.60" y1="350.00" x2="327.00" y2="350.00" stroke="#d8d8d8" stroke-width="0.8" stroke-dasharray="1.1,1.6"/>
<text x="169.20" y="505.80" font-size="7.6" fill="#444" font-weight="normal" text-anchor="end" textLength="9.70" lengthAdjust="spacingAndGlyphs" >0.0</text>
<text x="169.20" y="490.54" font-size="7.6" fill="#444" font-weight="normal" text-anchor="end" textLength="9.70" lengthAdjust="spacingAndGlyphs" >0.1</text>
<text x="169.20" y="475.28" font-size="7.6" fill="#444" font-weight="normal" text-anchor="end" textLength="9.70" lengthAdjust="spacingAndGlyphs" >0.2</text>
<text x="169.20" y="460.02" font-size="7.6" fill="#444" font-weight="normal" text-anchor="end" textLength="9.70" lengthAdjust="spacingAndGlyphs" >0.3</text>
<text x="169.20" y="444.76" font-size="7.6" fill="#444" font-weight="normal" text-anchor="end" textLength="9.70" lengthAdjust="spacingAndGlyphs" >0.4</text>
<text x="169.20" y="429.50" font-size="7.6" fill="#444" font-weight="normal" text-anchor="end" textLength="9.70" lengthAdjust="spacingAndGlyphs" >0.5</text>
<text x="169.20" y="414.24" font-size="7.6" fill="#444" font-weight="normal" text-anchor="end" textLength="9.70" lengthAdjust="spacingAndGlyphs" >0.6</text>
<text x="169.20" y="398.98" font-size="7.6" fill="#444" font-weight="normal" text-anchor="end" textLength="9.70" lengthAdjust="spacingAndGlyphs" >0.7</text>
<text x="169.20" y="383.72" font-size="7.6" fill="#444" font-weight="normal" text-anchor="end" textLength="9.70" lengthAdjust="spacingAndGlyphs" >0.8</text>
<text x="169.20" y="368.46" font-size="7.6" fill="#444" font-weight="normal" text-anchor="end" textLength="9.70" lengthAdjust="spacingAndGlyphs" >0.9</text>
<text x="169.20" y="353.20" font-size="7.6" fill="#444" font-weight="normal" text-anchor="end" textLength="9.70" lengthAdjust="spacingAndGlyphs" >1.0</text>
<text x="173.20" y="511.90" font-size="7.6" fill="#444" font-weight="normal" text-anchor="middle" textLength="3.90" lengthAdjust="spacingAndGlyphs" >0</text>
<text x="204.05" y="511.90" font-size="7.6" fill="#444" font-weight="normal" text-anchor="middle" textLength="10.80" lengthAdjust="spacingAndGlyphs" >100</text>
<text x="234.90" y="511.90" font-size="7.6" fill="#444" font-weight="normal" text-anchor="middle" textLength="10.80" lengthAdjust="spacingAndGlyphs" >200</text>
<text x="265.75" y="511.90" font-size="7.6" fill="#444" font-weight="normal" text-anchor="middle" textLength="10.80" lengthAdjust="spacingAndGlyphs" >300</text>
<text x="296.60" y="511.90" font-size="7.6" fill="#444" font-weight="normal" text-anchor="middle" textLength="10.80" lengthAdjust="spacingAndGlyphs" >400</text>
<text x="327.45" y="511.90" font-size="7.6" fill="#444" font-weight="normal" text-anchor="middle" textLength="10.80" lengthAdjust="spacingAndGlyphs" >500</text>
<text x="250.00" y="523.60" font-size="8" fill="#444" font-weight="normal" text-anchor="middle" textLength="30.00" lengthAdjust="spacingAndGlyphs" >distance</text>
<text x="0.00" y="0.00" font-size="8.6" fill="#444" font-weight="normal" text-anchor="middle" textLength="38.50" lengthAdjust="spacingAndGlyphs" transform="translate(155.3,423.7) rotate(-90)">gamma(h)</text>
<g clip-path="url(#c3)">
<line x1="173.60" y1="350.00" x2="327.00" y2="350.00" stroke="#77ee77" stroke-width="1.6" />
<polyline points="173.20,502.60 173.97,489.60 174.74,476.77 175.51,464.30 176.28,452.35 177.06,441.12 177.83,430.76 178.60,421.46 179.37,413.40 180.14,406.74 180.91,401.68 181.68,398.38 182.45,396.85 183.23,395.69 184.00,394.53 184.77,393.38 185.54,392.24 186.31,391.10 187.08,389.97 187.85,388.85 188.62,387.74 189.40,386.63 190.17,385.53 190.94,384.44 191.71,383.36 192.48,382.29 193.25,381.23 194.02,380.18 194.79,379.14 195.57,378.11 196.34,377.09 197.11,376.09 197.88,375.10 198.65,374.12 199.42,373.15 200.19,372.20 200.96,371.26 201.74,370.34 202.51,369.43 203.28,368.54 204.05,367.66 204.82,366.80 205.59,365.96 206.36,365.13 207.13,364.32 207.91,363.53 208.68,362.76 209.45,362.00 210.22,361.27 210.99,360.55 211.76,359.85 212.53,359.18 213.30,358.52 214.08,357.88 214.85,357.27 215.62,356.68 216.39,356.11 217.16,355.56 217.93,355.04 218.70,354.54 219.47,354.06 220.25,353.61 221.02,353.18 221.79,352.78 222.56,352.40 223.33,352.05 224.10,351.73 224.87,351.43 225.64,351.16 226.42,350.91 227.19,350.70 227.96,350.51 228.73,350.35 229.50,350.22 230.27,350.12 231.04,350.05 231.81,350.01 232.59,350.00 233.36,350.00 234.13,350.00 234.90,350.00 235.67,350.00 236.44,350.00 237.21,350.00 237.98,350.00 238.76,350.00 239.53,350.00 240.30,350.00 241.07,350.00 241.84,350.00 242.61,350.00 243.38,350.00 244.15,350.00 244.93,350.00 245.70,350.00 246.47,350.00 247.24,350.00 248.01,350.00 248.78,350.00 249.55,350.00 250.32,350.00 251.10,350.00 251.87,350.00 252.64,350.00 253.41,350.00 254.18,350.00 254.95,350.00 255.72,350.00 256.50,350.00 257.27,350.00 258.04,350.00 258.81,350.00 259.58,350.00 260.35,350.00 261.12,350.00 261.89,350.00 262.66,350.00 263.44,350.00 264.21,350.00 264.98,350.00 265.75,350.00 266.52,350.00 267.29,350.00 268.06,350.00 268.83,350.00 269.61,350.00 270.38,350.00 271.15,350.00 271.92,350.00 272.69,350.00 273.46,350.00 274.23,350.00 275.00,350.00 275.78,350.00 276.55,350.00 277.32,350.00 278.09,350.00 278.86,350.00 279.63,350.00 280.40,350.00 281.17,350.00 281.95,350.00 282.72,350.00 283.49,350.00 284.26,350.00 285.03,350.00 285.80,350.00 286.57,350.00 287.34,350.00 288.12,350.00 288.89,350.00 289.66,350.00 290.43,350.00 291.20,350.00 291.97,350.00 292.74,350.00 293.51,350.00 294.29,350.00 295.06,350.00 295.83,350.00 296.60,350.00 297.37,350.00 298.14,350.00 298.91,350.00 299.69,350.00 300.46,350.00 301.23,350.00 302.00,350.00 302.77,350.00 303.54,350.00 304.31,350.00 305.08,350.00 305.86,350.00 306.63,350.00 307.40,350.00 308.17,350.00 308.94,350.00 309.71,350.00 310.48,350.00 311.25,350.00 312.02,350.00 312.80,350.00 313.57,350.00 314.34,350.00 315.11,350.00 315.88,350.00 316.65,350.00 317.42,350.00 318.19,350.00 318.97,350.00 319.74,350.00 320.51,350.00 321.28,350.00 322.05,350.00 322.82,350.00 323.59,350.00 324.37,350.00 325.14,350.00 325.91,350.00 326.68,350.00 327.45,350.00" fill="none" stroke="#ff3a3a" stroke-width="1.1" stroke-linejoin="round" />
<polyline points="175.00,425.00 177.40,413.00 186.00,502.60 326.00,502.60" fill="none" stroke="#333" stroke-width="1" stroke-linejoin="round" />
<line x1="171.80" y1="425.00" x2="178.20" y2="425.00" stroke="#333" stroke-width="1" />
<line x1="175.00" y1="421.80" x2="175.00" y2="428.20" stroke="#333" stroke-width="1" />
<line x1="174.20" y1="413.00" x2="180.60" y2="413.00" stroke="#333" stroke-width="1" />
<line x1="177.40" y1="409.80" x2="177.40" y2="416.20" stroke="#333" stroke-width="1" />
<line x1="185.54" y1="499.40" x2="185.54" y2="502.60" stroke="#333" stroke-width="1" />
<line x1="191.71" y1="499.40" x2="191.71" y2="502.60" stroke="#333" stroke-width="1" />
<line x1="197.88" y1="499.40" x2="197.88" y2="502.60" stroke="#333" stroke-width="1" />
<line x1="204.05" y1="499.40" x2="204.05" y2="502.60" stroke="#333" stroke-width="1" />
<line x1="210.22" y1="499.40" x2="210.22" y2="502.60" stroke="#333" stroke-width="1" />
<line x1="216.39" y1="499.40" x2="216.39" y2="502.60" stroke="#333" stroke-width="1" />
<line x1="222.56" y1="499.40" x2="222.56" y2="502.60" stroke="#333" stroke-width="1" />
<line x1="228.73" y1="499.40" x2="228.73" y2="502.60" stroke="#333" stroke-width="1" />
<line x1="234.90" y1="499.40" x2="234.90" y2="502.60" stroke="#333" stroke-width="1" />
<line x1="241.07" y1="499.40" x2="241.07" y2="502.60" stroke="#333" stroke-width="1" />
<line x1="247.24" y1="499.40" x2="247.24" y2="502.60" stroke="#333" stroke-width="1" />
<line x1="253.41" y1="499.40" x2="253.41" y2="502.60" stroke="#333" stroke-width="1" />
<line x1="259.58" y1="499.40" x2="259.58" y2="502.60" stroke="#333" stroke-width="1" />
<line x1="265.75" y1="499.40" x2="265.75" y2="502.60" stroke="#333" stroke-width="1" />
<line x1="271.92" y1="499.40" x2="271.92" y2="502.60" stroke="#333" stroke-width="1" />
<line x1="278.09" y1="499.40" x2="278.09" y2="502.60" stroke="#333" stroke-width="1" />
<line x1="284.26" y1="499.40" x2="284.26" y2="502.60" stroke="#333" stroke-width="1" />
<line x1="290.43" y1="499.40" x2="290.43" y2="502.60" stroke="#333" stroke-width="1" />
<line x1="296.60" y1="499.40" x2="296.60" y2="502.60" stroke="#333" stroke-width="1" />
<line x1="302.77" y1="499.40" x2="302.77" y2="502.60" stroke="#333" stroke-width="1" />
<line x1="308.94" y1="499.40" x2="308.94" y2="502.60" stroke="#333" stroke-width="1" />
<line x1="315.11" y1="499.40" x2="315.11" y2="502.60" stroke="#333" stroke-width="1" />
<line x1="321.28" y1="499.40" x2="321.28" y2="502.60" stroke="#333" stroke-width="1" />
<line x1="327.45" y1="499.40" x2="327.45" y2="502.60" stroke="#333" stroke-width="1" />
<circle cx="182.40" cy="411.00" r="3.30" fill="#00ffff" stroke="none" stroke-width="1" />
<circle cx="234.60" cy="441.40" r="3.30" fill="#00ffff" stroke="none" stroke-width="1" />
<circle cx="173.80" cy="502.40" r="3.30" fill="#00ffff" stroke="none" stroke-width="1" />
</g>
<rect x="140.90" y="531.80" width="189.60" height="27.30" fill="#ffffff" stroke="#404040" stroke-width="1.1" />
<line x1="143.70" y1="539.00" x2="151.30" y2="539.00" stroke="#333" stroke-width="1" />
<line x1="147.50" y1="535.20" x2="147.50" y2="542.80" stroke="#333" stroke-width="1" />
<text x="153.60" y="541.80" font-size="8.3" fill="#3a3a3a" font-weight="normal" text-anchor="start" textLength="26.40" lengthAdjust="spacingAndGlyphs" >Normal</text>
<line x1="184.00" y1="539.00" x2="193.00" y2="539.00" stroke="#44dd44" stroke-width="1" />
<text x="195.60" y="541.80" font-size="8.3" fill="#3a3a3a" font-weight="normal" text-anchor="start" textLength="30.40" lengthAdjust="spacingAndGlyphs" >Variance</text>
<line x1="230.40" y1="539.00" x2="239.60" y2="539.00" stroke="#ff4040" stroke-width="1" />
<text x="241.60" y="541.80" font-size="8.3" fill="#3a3a3a" font-weight="normal" text-anchor="start" textLength="59.40" lengthAdjust="spacingAndGlyphs" >Variogram Model</text>
<circle cx="147.50" cy="552.40" r="3.30" fill="#00ffff" stroke="none" stroke-width="1" />
<text x="153.60" y="555.20" font-size="8.3" fill="#3a3a3a" font-weight="normal" text-anchor="start" textLength="74.40" lengthAdjust="spacingAndGlyphs" >Variogram Structures</text>
<rect x="341.60" y="311.20" width="135.40" height="13.00" fill="#ffffff" stroke="none" stroke-width="1" />
<line x1="342.10" y1="311.20" x2="342.10" y2="324.30" stroke="#c8d6e8" stroke-width="1" />
<line x1="476.50" y1="311.20" x2="476.50" y2="324.30" stroke="#c8d6e8" stroke-width="1" />
<line x1="341.60" y1="311.70" x2="477.00" y2="311.70" stroke="#c8d6e8" stroke-width="1" />
<text x="409.30" y="320.80" font-size="7.6" fill="#3a3a3a" font-weight="normal" text-anchor="middle" textLength="111.40" lengthAdjust="spacingAndGlyphs" >semi-major: 8.76987 -&gt; 60.9634 (5)</text>
<rect x="527.50" y="314.70" width="5.20" height="5.20" fill="#dcdcdc" stroke="#6a6a6a" stroke-width="1" />
<line x1="530.10" y1="315.20" x2="530.10" y2="319.90" stroke="#6a6a6a" stroke-width="0.8" />
<rect x="337.00" y="324.60" width="201.00" height="237.00" fill="none" stroke="#b0b8c2" stroke-width="1.2" />
<line x1="537.00" y1="325.00" x2="537.00" y2="561.00" stroke="#c8ced6" stroke-width="1.5" />
<line x1="336.50" y1="561.20" x2="538.50" y2="561.20" stroke="#c0c6ce" stroke-width="1.4" />
<text x="437.50" y="338.40" font-size="11.6" fill="#2c2c2c" font-weight="bold" text-anchor="middle" textLength="193.00" lengthAdjust="spacingAndGlyphs" >semi-major: 8.76987 -&gt; 60.9634 (5)</text>
<rect x="373.00" y="345.60" width="158.40" height="157.50" fill="#ffffff" stroke="#c4c4c4" stroke-width="0.8" />
<line x1="372.80" y1="345.60" x2="372.80" y2="503.10" stroke="#a8a8a8" stroke-width="1.3" />
<line x1="373.00" y1="503.10" x2="531.40" y2="503.10" stroke="#a8a8a8" stroke-width="1.2" />
<line x1="404.45" y1="345.60" x2="404.45" y2="503.10" stroke="#d8d8d8" stroke-width="0.8" stroke-dasharray="1.1,1.6"/>
<line x1="436.30" y1="345.60" x2="436.30" y2="503.10" stroke="#d8d8d8" stroke-width="0.8" stroke-dasharray="1.1,1.6"/>
<line x1="468.15" y1="345.60" x2="468.15" y2="503.10" stroke="#d8d8d8" stroke-width="0.8" stroke-dasharray="1.1,1.6"/>
<line x1="500.00" y1="345.60" x2="500.00" y2="503.10" stroke="#d8d8d8" stroke-width="0.8" stroke-dasharray="1.1,1.6"/>
<line x1="373.00" y1="491.14" x2="531.40" y2="491.14" stroke="#d8d8d8" stroke-width="0.8" stroke-dasharray="1.1,1.6"/>
<line x1="373.00" y1="479.18" x2="531.40" y2="479.18" stroke="#d8d8d8" stroke-width="0.8" stroke-dasharray="1.1,1.6"/>
<line x1="373.00" y1="467.22" x2="531.40" y2="467.22" stroke="#d8d8d8" stroke-width="0.8" stroke-dasharray="1.1,1.6"/>
<line x1="373.00" y1="455.26" x2="531.40" y2="455.26" stroke="#d8d8d8" stroke-width="0.8" stroke-dasharray="1.1,1.6"/>
<line x1="373.00" y1="443.30" x2="531.40" y2="443.30" stroke="#d8d8d8" stroke-width="0.8" stroke-dasharray="1.1,1.6"/>
<line x1="373.00" y1="431.34" x2="531.40" y2="431.34" stroke="#d8d8d8" stroke-width="0.8" stroke-dasharray="1.1,1.6"/>
<line x1="373.00" y1="419.38" x2="531.40" y2="419.38" stroke="#d8d8d8" stroke-width="0.8" stroke-dasharray="1.1,1.6"/>
<line x1="373.00" y1="407.42" x2="531.40" y2="407.42" stroke="#d8d8d8" stroke-width="0.8" stroke-dasharray="1.1,1.6"/>
<line x1="373.00" y1="395.46" x2="531.40" y2="395.46" stroke="#d8d8d8" stroke-width="0.8" stroke-dasharray="1.1,1.6"/>
<line x1="373.00" y1="383.50" x2="531.40" y2="383.50" stroke="#d8d8d8" stroke-width="0.8" stroke-dasharray="1.1,1.6"/>
<line x1="373.00" y1="371.54" x2="531.40" y2="371.54" stroke="#d8d8d8" stroke-width="0.8" stroke-dasharray="1.1,1.6"/>
<line x1="373.00" y1="359.58" x2="531.40" y2="359.58" stroke="#d8d8d8" stroke-width="0.8" stroke-dasharray="1.1,1.6"/>
<line x1="373.00" y1="347.62" x2="531.40" y2="347.62" stroke="#d8d8d8" stroke-width="0.8" stroke-dasharray="1.1,1.6"/>
<text x="369.20" y="506.30" font-size="7.6" fill="#444" font-weight="normal" text-anchor="end" textLength="9.70" lengthAdjust="spacingAndGlyphs" >0.0</text>
<text x="369.20" y="494.34" font-size="7.6" fill="#444" font-weight="normal" text-anchor="end" textLength="9.70" lengthAdjust="spacingAndGlyphs" >0.1</text>
<text x="369.20" y="482.38" font-size="7.6" fill="#444" font-weight="normal" text-anchor="end" textLength="9.70" lengthAdjust="spacingAndGlyphs" >0.2</text>
<text x="369.20" y="470.42" font-size="7.6" fill="#444" font-weight="normal" text-anchor="end" textLength="9.70" lengthAdjust="spacingAndGlyphs" >0.3</text>
<text x="369.20" y="458.46" font-size="7.6" fill="#444" font-weight="normal" text-anchor="end" textLength="9.70" lengthAdjust="spacingAndGlyphs" >0.4</text>
<text x="369.20" y="446.50" font-size="7.6" fill="#444" font-weight="normal" text-anchor="end" textLength="9.70" lengthAdjust="spacingAndGlyphs" >0.5</text>
<text x="369.20" y="434.54" font-size="7.6" fill="#444" font-weight="normal" text-anchor="end" textLength="9.70" lengthAdjust="spacingAndGlyphs" >0.6</text>
<text x="369.20" y="422.58" font-size="7.6" fill="#444" font-weight="normal" text-anchor="end" textLength="9.70" lengthAdjust="spacingAndGlyphs" >0.7</text>
<text x="369.20" y="410.62" font-size="7.6" fill="#444" font-weight="normal" text-anchor="end" textLength="9.70" lengthAdjust="spacingAndGlyphs" >0.8</text>
<text x="369.20" y="398.66" font-size="7.6" fill="#444" font-weight="normal" text-anchor="end" textLength="9.70" lengthAdjust="spacingAndGlyphs" >0.9</text>
<text x="369.20" y="386.70" font-size="7.6" fill="#444" font-weight="normal" text-anchor="end" textLength="9.70" lengthAdjust="spacingAndGlyphs" >1.0</text>
<text x="369.20" y="374.74" font-size="7.6" fill="#444" font-weight="normal" text-anchor="end" textLength="9.70" lengthAdjust="spacingAndGlyphs" >1.1</text>
<text x="369.20" y="362.78" font-size="7.6" fill="#444" font-weight="normal" text-anchor="end" textLength="9.70" lengthAdjust="spacingAndGlyphs" >1.2</text>
<text x="369.20" y="350.82" font-size="7.6" fill="#444" font-weight="normal" text-anchor="end" textLength="9.70" lengthAdjust="spacingAndGlyphs" >1.3</text>
<text x="372.60" y="511.90" font-size="7.6" fill="#444" font-weight="normal" text-anchor="middle" textLength="3.90" lengthAdjust="spacingAndGlyphs" >0</text>
<text x="404.45" y="511.90" font-size="7.6" fill="#444" font-weight="normal" text-anchor="middle" textLength="10.80" lengthAdjust="spacingAndGlyphs" >100</text>
<text x="436.30" y="511.90" font-size="7.6" fill="#444" font-weight="normal" text-anchor="middle" textLength="10.80" lengthAdjust="spacingAndGlyphs" >200</text>
<text x="468.15" y="511.90" font-size="7.6" fill="#444" font-weight="normal" text-anchor="middle" textLength="10.80" lengthAdjust="spacingAndGlyphs" >300</text>
<text x="500.00" y="511.90" font-size="7.6" fill="#444" font-weight="normal" text-anchor="middle" textLength="10.80" lengthAdjust="spacingAndGlyphs" >400</text>
<text x="531.85" y="511.90" font-size="7.6" fill="#444" font-weight="normal" text-anchor="middle" textLength="10.80" lengthAdjust="spacingAndGlyphs" >500</text>
<text x="452.00" y="523.60" font-size="8" fill="#444" font-weight="normal" text-anchor="middle" textLength="30.00" lengthAdjust="spacingAndGlyphs" >distance</text>
<text x="0.00" y="0.00" font-size="8.6" fill="#444" font-weight="normal" text-anchor="middle" textLength="38.50" lengthAdjust="spacingAndGlyphs" transform="translate(355.3,423.7) rotate(-90)">gamma(h)</text>
<g clip-path="url(#c4)">
<line x1="373.00" y1="383.50" x2="531.40" y2="383.50" stroke="#77ee77" stroke-width="1.6" />
<polyline points="372.60,503.10 373.40,492.89 374.19,482.82 374.99,473.02 375.79,463.64 376.58,454.81 377.38,446.68 378.17,439.37 378.97,433.03 379.77,427.80 380.56,423.81 381.36,421.20 382.16,419.99 382.95,419.06 383.75,418.13 384.54,417.22 385.34,416.30 386.14,415.39 386.93,414.49 387.73,413.59 388.53,412.70 389.32,411.82 390.12,410.95 390.91,410.08 391.71,409.22 392.51,408.36 393.30,407.52 394.10,406.68 394.90,405.86 395.69,405.04 396.49,404.23 397.28,403.43 398.08,402.65 398.88,401.87 399.67,401.11 400.47,400.35 401.27,399.61 402.06,398.88 402.86,398.16 403.65,397.46 404.45,396.77 405.25,396.09 406.04,395.43 406.84,394.78 407.64,394.14 408.43,393.52 409.23,392.92 410.02,392.33 410.82,391.76 411.62,391.20 412.41,390.66 413.21,390.13 414.00,389.63 414.80,389.14 415.60,388.67 416.39,388.21 417.19,387.78 417.99,387.36 418.78,386.97 419.58,386.59 420.38,386.23 421.17,385.90 421.97,385.58 422.76,385.29 423.56,385.01 424.36,384.76 425.15,384.53 425.95,384.32 426.75,384.14 427.54,383.97 428.34,383.84 429.13,383.72 429.93,383.63 430.73,383.56 431.52,383.52 432.32,383.50 433.12,383.50 433.91,383.50 434.71,383.50 435.50,383.50 436.30,383.50 437.10,383.50 437.89,383.50 438.69,383.50 439.49,383.50 440.28,383.50 441.08,383.50 441.87,383.50 442.67,383.50 443.47,383.50 444.26,383.50 445.06,383.50 445.86,383.50 446.65,383.50 447.45,383.50 448.24,383.50 449.04,383.50 449.84,383.50 450.63,383.50 451.43,383.50 452.23,383.50 453.02,383.50 453.82,383.50 454.61,383.50 455.41,383.50 456.21,383.50 457.00,383.50 457.80,383.50 458.60,383.50 459.39,383.50 460.19,383.50 460.98,383.50 461.78,383.50 462.58,383.50 463.37,383.50 464.17,383.50 464.97,383.50 465.76,383.50 466.56,383.50 467.35,383.50 468.15,383.50 468.95,383.50 469.74,383.50 470.54,383.50 471.34,383.50 472.13,383.50 472.93,383.50 473.72,383.50 474.52,383.50 475.32,383.50 476.11,383.50 476.91,383.50 477.71,383.50 478.50,383.50 479.30,383.50 480.09,383.50 480.89,383.50 481.69,383.50 482.48,383.50 483.28,383.50 484.08,383.50 484.87,383.50 485.67,383.50 486.46,383.50 487.26,383.50 488.06,383.50 488.85,383.50 489.65,383.50 490.45,383.50 491.24,383.50 492.04,383.50 492.83,383.50 493.63,383.50 494.43,383.50 495.22,383.50 496.02,383.50 496.82,383.50 497.61,383.50 498.41,383.50 499.20,383.50 500.00,383.50 500.80,383.50 501.59,383.50 502.39,383.50 503.19,383.50 503.98,383.50 504.78,383.50 505.57,383.50 506.37,383.50 507.17,383.50 507.96,383.50 508.76,383.50 509.56,383.50 510.35,383.50 511.15,383.50 511.94,383.50 512.74,383.50 513.54,383.50 514.33,383.50 515.13,383.50 515.92,383.50 516.72,383.50 517.52,383.50 518.31,383.50 519.11,383.50 519.91,383.50 520.70,383.50 521.50,383.50 522.30,383.50 523.09,383.50 523.89,383.50 524.68,383.50 525.48,383.50 526.28,383.50 527.07,383.50 527.87,383.50 528.66,383.50 529.46,383.50 530.26,383.50 531.05,383.50 531.85,383.50" fill="none" stroke="#ff3a3a" stroke-width="1.1" stroke-linejoin="round" />
<polyline points="373.00,502.60 380.00,374.00 386.40,390.00 391.60,403.00 399.00,410.00 404.60,413.60 411.00,405.00 417.40,402.60 423.00,391.00 429.60,398.00 436.00,392.00 442.40,392.00 448.60,389.00 455.00,392.00 461.60,390.00 467.60,392.00 473.60,376.00 480.40,371.60 486.60,376.60 493.00,372.00 499.60,373.00 505.60,368.00 512.00,362.00 518.00,369.60 524.40,350.00 530.00,353.60" fill="none" stroke="#333" stroke-width="1" stroke-linejoin="round" />
<line x1="376.80" y1="374.00" x2="383.20" y2="374.00" stroke="#333" stroke-width="1" />
<line x1="380.00" y1="370.80" x2="380.00" y2="377.20" stroke="#333" stroke-width="1" />
<line x1="383.20" y1="390.00" x2="389.60" y2="390.00" stroke="#333" stroke-width="1" />
<line x1="386.40" y1="386.80" x2="386.40" y2="393.20" stroke="#333" stroke-width="1" />
<line x1="388.40" y1="403.00" x2="394.80" y2="403.00" stroke="#333" stroke-width="1" />
<line x1="391.60" y1="399.80" x2="391.60" y2="406.20" stroke="#333" stroke-width="1" />
<line x1="395.80" y1="410.00" x2="402.20" y2="410.00" stroke="#333" stroke-width="1" />
<line x1="399.00" y1="406.80" x2="399.00" y2="413.20" stroke="#333" stroke-width="1" />
<line x1="401.40" y1="413.60" x2="407.80" y2="413.60" stroke="#333" stroke-width="1" />
<line x1="404.60" y1="410.40" x2="404.60" y2="416.80" stroke="#333" stroke-width="1" />
<line x1="407.80" y1="405.00" x2="414.20" y2="405.00" stroke="#333" stroke-width="1" />
<line x1="411.00" y1="401.80" x2="411.00" y2="408.20" stroke="#333" stroke-width="1" />
<line x1="414.20" y1="402.60" x2="420.60" y2="402.60" stroke="#333" stroke-width="1" />
<line x1="417.40" y1="399.40" x2="417.40" y2="405.80" stroke="#333" stroke-width="1" />
<line x1="419.80" y1="391.00" x2="426.20" y2="391.00" stroke="#333" stroke-width="1" />
<line x1="423.00" y1="387.80" x2="423.00" y2="394.20" stroke="#333" stroke-width="1" />
<line x1="426.40" y1="398.00" x2="432.80" y2="398.00" stroke="#333" stroke-width="1" />
<line x1="429.60" y1="394.80" x2="429.60" y2="401.20" stroke="#333" stroke-width="1" />
<line x1="432.80" y1="392.00" x2="439.20" y2="392.00" stroke="#333" stroke-width="1" />
<line x1="436.00" y1="388.80" x2="436.00" y2="395.20" stroke="#333" stroke-width="1" />
<line x1="439.20" y1="392.00" x2="445.60" y2="392.00" stroke="#333" stroke-width="1" />
<line x1="442.40" y1="388.80" x2="442.40" y2="395.20" stroke="#333" stroke-width="1" />
<line x1="445.40" y1="389.00" x2="451.80" y2="389.00" stroke="#333" stroke-width="1" />
<line x1="448.60" y1="385.80" x2="448.60" y2="392.20" stroke="#333" stroke-width="1" />
<line x1="451.80" y1="392.00" x2="458.20" y2="392.00" stroke="#333" stroke-width="1" />
<line x1="455.00" y1="388.80" x2="455.00" y2="395.20" stroke="#333" stroke-width="1" />
<line x1="458.40" y1="390.00" x2="464.80" y2="390.00" stroke="#333" stroke-width="1" />
<line x1="461.60" y1="386.80" x2="461.60" y2="393.20" stroke="#333" stroke-width="1" />
<line x1="464.40" y1="392.00" x2="470.80" y2="392.00" stroke="#333" stroke-width="1" />
<line x1="467.60" y1="388.80" x2="467.60" y2="395.20" stroke="#333" stroke-width="1" />
<line x1="470.40" y1="376.00" x2="476.80" y2="376.00" stroke="#333" stroke-width="1" />
<line x1="473.60" y1="372.80" x2="473.60" y2="379.20" stroke="#333" stroke-width="1" />
<line x1="477.20" y1="371.60" x2="483.60" y2="371.60" stroke="#333" stroke-width="1" />
<line x1="480.40" y1="368.40" x2="480.40" y2="374.80" stroke="#333" stroke-width="1" />
<line x1="483.40" y1="376.60" x2="489.80" y2="376.60" stroke="#333" stroke-width="1" />
<line x1="486.60" y1="373.40" x2="486.60" y2="379.80" stroke="#333" stroke-width="1" />
<line x1="489.80" y1="372.00" x2="496.20" y2="372.00" stroke="#333" stroke-width="1" />
<line x1="493.00" y1="368.80" x2="493.00" y2="375.20" stroke="#333" stroke-width="1" />
<line x1="496.40" y1="373.00" x2="502.80" y2="373.00" stroke="#333" stroke-width="1" />
<line x1="499.60" y1="369.80" x2="499.60" y2="376.20" stroke="#333" stroke-width="1" />
<line x1="502.40" y1="368.00" x2="508.80" y2="368.00" stroke="#333" stroke-width="1" />
<line x1="505.60" y1="364.80" x2="505.60" y2="371.20" stroke="#333" stroke-width="1" />
<line x1="508.80" y1="362.00" x2="515.20" y2="362.00" stroke="#333" stroke-width="1" />
<line x1="512.00" y1="358.80" x2="512.00" y2="365.20" stroke="#333" stroke-width="1" />
<line x1="514.80" y1="369.60" x2="521.20" y2="369.60" stroke="#333" stroke-width="1" />
<line x1="518.00" y1="366.40" x2="518.00" y2="372.80" stroke="#333" stroke-width="1" />
<line x1="521.20" y1="350.00" x2="527.60" y2="350.00" stroke="#333" stroke-width="1" />
<line x1="524.40" y1="346.80" x2="524.40" y2="353.20" stroke="#333" stroke-width="1" />
<line x1="526.80" y1="353.60" x2="533.20" y2="353.60" stroke="#333" stroke-width="1" />
<line x1="530.00" y1="350.40" x2="530.00" y2="356.80" stroke="#333" stroke-width="1" />
<circle cx="382.00" cy="430.60" r="3.30" fill="#00ffff" stroke="none" stroke-width="1" />
<circle cx="436.00" cy="454.40" r="3.30" fill="#00ffff" stroke="none" stroke-width="1" />
<circle cx="373.20" cy="502.40" r="3.30" fill="#00ffff" stroke="none" stroke-width="1" />
</g>
<rect x="338.90" y="531.80" width="196.20" height="27.30" fill="#ffffff" stroke="#404040" stroke-width="1.1" />
<line x1="341.80" y1="539.00" x2="349.40" y2="539.00" stroke="#333" stroke-width="1" />
<line x1="345.60" y1="535.20" x2="345.60" y2="542.80" stroke="#333" stroke-width="1" />
<text x="353.00" y="541.80" font-size="8.3" fill="#3a3a3a" font-weight="normal" text-anchor="start" textLength="26.60" lengthAdjust="spacingAndGlyphs" >Normal</text>
<line x1="384.00" y1="539.00" x2="393.60" y2="539.00" stroke="#44dd44" stroke-width="1" />
<text x="395.60" y="541.80" font-size="8.3" fill="#3a3a3a" font-weight="normal" text-anchor="start" textLength="31.40" lengthAdjust="spacingAndGlyphs" >Variance</text>
<line x1="431.00" y1="539.00" x2="440.40" y2="539.00" stroke="#ff4040" stroke-width="1" />
<text x="443.00" y="541.80" font-size="8.3" fill="#3a3a3a" font-weight="normal" text-anchor="start" textLength="61.00" lengthAdjust="spacingAndGlyphs" >Variogram Model</text>
<circle cx="345.60" cy="552.40" r="3.30" fill="#00ffff" stroke="none" stroke-width="1" />
<text x="353.00" y="555.20" font-size="8.3" fill="#3a3a3a" font-weight="normal" text-anchor="start" textLength="76.00" lengthAdjust="spacingAndGlyphs" >Variogram Structures</text>
<rect x="-10.00" y="566.20" width="547.00" height="95.60" fill="#ffffff" stroke="#a8b2bc" stroke-width="1.2" />
<line x1="536.30" y1="567.00" x2="536.30" y2="661.50" stroke="#c4ccd4" stroke-width="1" />
<text x="-12.00" y="586.30" font-size="8" fill="#3a3a3a" font-weight="normal" text-anchor="start" textLength="79.00" lengthAdjust="spacingAndGlyphs" >Load - Results in valid.not</text>
<text x="-41.50" y="596.30" font-size="8" fill="#3a3a3a" font-weight="normal" text-anchor="start" textLength="231.50" lengthAdjust="spacingAndGlyphs" >Calculate experimental variogram before you can load a variogram model.</text>
<rect x="541.50" y="54.50" width="560.00" height="320.00" fill="#eeeeee" stroke="#a0a8b0" stroke-width="1" />
<text x="545.50" y="66.20" font-size="7.4" fill="#3a3a3a" font-weight="normal" text-anchor="start" textLength="53.50" lengthAdjust="spacingAndGlyphs" >Variogram model</text>
<line x1="542.00" y1="73.50" x2="1080.00" y2="73.50" stroke="#d0dae6" stroke-width="1" />
<rect x="542.00" y="98.50" width="540.00" height="275.50" fill="#ffffff" stroke="none" stroke-width="1" />
<line x1="542.00" y1="98.30" x2="1080.00" y2="98.30" stroke="#b4c4dc" stroke-width="1.3" />
<line x1="542.00" y1="374.30" x2="1080.00" y2="374.30" stroke="#a8bcd4" stroke-width="1.2" />
<rect x="542.30" y="78.90" width="63.20" height="13.60" fill="none" stroke="#a0a8b0" stroke-width="1" />
<rect x="542.80" y="79.40" width="14.00" height="12.60" fill="#f2f2f2" stroke="#a8b0b8" stroke-width="1" />
<rect x="544.80" y="84.00" width="10.00" height="6.50" fill="url(#gbox)" stroke="#c4d2e6" stroke-width="0.6" />
<line x1="544.80" y1="90.00" x2="554.80" y2="90.00" stroke="#6c98d8" stroke-width="1" />
<polyline points="546.30,88.50 548.80,86.92 553.80,86.92" fill="none" stroke="#f06040" stroke-width="1" stroke-linejoin="round" />
<rect x="559.30" y="79.40" width="13.70" height="12.60" fill="#f2f2f2" stroke="#a8b0b8" stroke-width="1" />
<rect x="561.30" y="84.00" width="9.70" height="6.50" fill="url(#gbox)" stroke="#c4d2e6" stroke-width="0.6" />
<line x1="561.30" y1="90.00" x2="571.00" y2="90.00" stroke="#6c98d8" stroke-width="1" />
<polyline points="562.80,88.50 565.30,86.92 570.00,86.92" fill="none" stroke="#f06040" stroke-width="1" stroke-linejoin="round" />
<rect x="575.30" y="79.40" width="13.50" height="12.60" fill="#f2f2f2" stroke="#a8b0b8" stroke-width="1" />
<rect x="577.30" y="84.00" width="9.50" height="6.50" fill="url(#gbox)" stroke="#c4d2e6" stroke-width="0.6" />
<line x1="577.30" y1="90.00" x2="586.80" y2="90.00" stroke="#6c98d8" stroke-width="1" />
<polyline points="578.80,88.50 581.30,86.92 585.80,86.92" fill="none" stroke="#f06040" stroke-width="1" stroke-linejoin="round" />
<rect x="591.00" y="79.40" width="14.00" height="12.60" fill="#f2f2f2" stroke="#a8b0b8" stroke-width="1" />
<rect x="593.00" y="84.00" width="10.00" height="6.50" fill="url(#gbox)" stroke="#c4d2e6" stroke-width="0.6" />
<line x1="593.00" y1="90.00" x2="603.00" y2="90.00" stroke="#6c98d8" stroke-width="1" />
<polyline points="594.50,88.50 597.00,86.92 602.00,86.92" fill="none" stroke="#f06040" stroke-width="1" stroke-linejoin="round" />
<rect x="550.50" y="80.70" width="4.80" height="4.80" fill="url(#gtag)" stroke="#6a6450" stroke-width="1" />
<circle cx="547.00" cy="89.50" r="0.90" fill="#2060d0" stroke="none" stroke-width="1" />
<circle cx="550.00" cy="88.70" r="0.90" fill="#2060d0" stroke="none" stroke-width="1" />
<line x1="565.50" y1="80.50" x2="570.50" y2="85.50" stroke="#e83020" stroke-width="1.5" />
<line x1="570.50" y1="80.50" x2="565.50" y2="85.50" stroke="#e83020" stroke-width="1.5" />
<rect x="582.50" y="80.70" width="4.80" height="4.80" fill="url(#gtag)" stroke="#6a6450" stroke-width="1" />
<rect x="598.50" y="80.70" width="4.80" height="4.80" fill="url(#gtag)" stroke="#6a6450" stroke-width="1" />
<rect x="608.10" y="79.80" width="18.60" height="15.00" fill="url(#gbox)" stroke="#c4d2e6" stroke-width="1" />
<line x1="608.10" y1="94.50" x2="627.20" y2="94.50" stroke="#6c98d8" stroke-width="1.6" />
<line x1="626.40" y1="79.80" x2="626.40" y2="95.30" stroke="#7aa2dc" stroke-width="1.2" />
<line x1="610.10" y1="81.30" x2="610.10" y2="92.30" stroke="#c8d0dc" stroke-width="0.7" />
<line x1="610.10" y1="92.30" x2="625.20" y2="92.30" stroke="#c8d0dc" stroke-width="0.7" />
<polyline points="610.60,90.80 614.07,86.02 624.70,86.02" fill="none" stroke="#f06040" stroke-width="1.2" stroke-linejoin="round" />
<polygon points="634.80,85.30 638.20,85.30 636.50,87.30" fill="#333" stroke="none" stroke-width="1" />
<rect x="643.60" y="79.50" width="15.00" height="12.70" fill="#f2f2f2" stroke="#a8b0b8" stroke-width="1" />
<rect x="646.00" y="82.00" width="11.00" height="8.50" fill="url(#gbox)" stroke="#c4d2e6" stroke-width="0.6" />
<line x1="646.00" y1="90.00" x2="657.00" y2="90.00" stroke="#6c98d8" stroke-width="1" />
<polyline points="647.50,88.50 650.00,85.83 656.00,85.83" fill="none" stroke="#f06040" stroke-width="1" stroke-linejoin="round" />
<line x1="647.50" y1="82.50" x2="647.50" y2="89.50" stroke="#222" stroke-width="0.9" />
<rect x="662.50" y="79.50" width="15.00" height="12.70" fill="#f2f2f2" stroke="#a8b0b8" stroke-width="1" />
<rect x="664.50" y="82.50" width="11.50" height="8.00" fill="url(#gbox)" stroke="#c4d2e6" stroke-width="0.6" />
<line x1="664.50" y1="90.00" x2="676.00" y2="90.00" stroke="#6c98d8" stroke-width="1" />
<polyline points="666.00,88.50 668.50,86.10 675.00,86.10" fill="none" stroke="#f06040" stroke-width="1" stroke-linejoin="round" />
<polygon points="671.00,80.20 674.00,80.20 676.50,82.70 676.50,86.50 671.00,86.50" fill="#d8dce2" stroke="#9aa0a8" stroke-width="0.8" />
<text x="544.00" y="108.40" font-size="8.2" fill="#3a3a3a" font-weight="normal" text-anchor="start" textLength="100.50" lengthAdjust="spacingAndGlyphs" >Variogram model: Spherical</text>
<text x="544.00" y="118.90" font-size="8.2" fill="#3a3a3a" font-weight="normal" text-anchor="start" textLength="148.50" lengthAdjust="spacingAndGlyphs" >Experimental variogram type: Normalised</text>
<text x="939.00" y="132.60" font-size="8.2" fill="#3a3a3a" font-weight="normal" text-anchor="end" textLength="11.00" lengthAdjust="spacingAndGlyphs" >Sill</text>
<text x="746.00" y="143.30" font-size="8.2" fill="#3a3a3a" font-weight="normal" text-anchor="end" textLength="26.50" lengthAdjust="spacingAndGlyphs" >Nugget</text>
<text x="957.00" y="143.30" font-size="8.2" fill="#3a3a3a" font-weight="normal" text-anchor="end" textLength="3.80" lengthAdjust="spacingAndGlyphs" >0</text>
<text x="746.00" y="153.92" font-size="8.2" fill="#3a3a3a" font-weight="normal" text-anchor="end" textLength="39.00" lengthAdjust="spacingAndGlyphs" >Structure 1</text>
<text x="957.00" y="153.92" font-size="8.2" fill="#3a3a3a" font-weight="normal" text-anchor="end" textLength="34.00" lengthAdjust="spacingAndGlyphs" >0.599358</text>
<text x="746.00" y="164.54" font-size="8.2" fill="#3a3a3a" font-weight="normal" text-anchor="end" textLength="39.00" lengthAdjust="spacingAndGlyphs" >Structure 2</text>
<text x="957.00" y="164.54" font-size="8.2" fill="#3a3a3a" font-weight="normal" text-anchor="end" textLength="34.00" lengthAdjust="spacingAndGlyphs" >0.403595</text>
<text x="746.00" y="175.16" font-size="8.2" fill="#3a3a3a" font-weight="normal" text-anchor="end" textLength="39.00" lengthAdjust="spacingAndGlyphs" >Structure 3</text>
<text x="957.00" y="175.16" font-size="8.2" fill="#3a3a3a" font-weight="normal" text-anchor="end" >-</text>
<text x="746.00" y="185.78" font-size="8.2" fill="#3a3a3a" font-weight="normal" text-anchor="end" textLength="39.00" lengthAdjust="spacingAndGlyphs" >Structure 4</text>
<text x="957.00" y="185.78" font-size="8.2" fill="#3a3a3a" font-weight="normal" text-anchor="end" >-</text>
<text x="746.00" y="196.40" font-size="8.2" fill="#3a3a3a" font-weight="normal" text-anchor="end" textLength="39.00" lengthAdjust="spacingAndGlyphs" >Structure 5</text>
<text x="957.00" y="196.40" font-size="8.2" fill="#3a3a3a" font-weight="normal" text-anchor="end" >-</text>
<rect x="541.50" y="377.50" width="560.00" height="286.00" fill="#eeeeee" stroke="#a0a4a8" stroke-width="1" />
<text x="545.80" y="389.80" font-size="7.3" fill="#3a3a3a" font-weight="normal" text-anchor="start" textLength="47.50" lengthAdjust="spacingAndGlyphs" >Variogram map</text>
<line x1="542.00" y1="396.60" x2="1080.00" y2="396.60" stroke="#d0dae6" stroke-width="1" />
<rect x="542.00" y="413.30" width="540.00" height="249.70" fill="#ffffff" stroke="none" stroke-width="1" />
<line x1="542.00" y1="413.00" x2="1080.00" y2="413.00" stroke="#b4c4dc" stroke-width="1.3" />
<line x1="542.00" y1="663.30" x2="1080.00" y2="663.30" stroke="#a0aab8" stroke-width="1.2" />
<rect x="542.50" y="397.30" width="62.50" height="13.70" fill="none" stroke="#a0a8b0" stroke-width="1" />
<rect x="543.00" y="397.80" width="14.00" height="12.70" fill="#f2f2f2" stroke="#a8b0b8" stroke-width="1" />
<rect x="559.20" y="397.80" width="13.60" height="12.70" fill="#f2f2f2" stroke="#a8b0b8" stroke-width="1" />
<rect x="574.80" y="397.80" width="14.00" height="12.70" fill="#f2f2f2" stroke="#a8b0b8" stroke-width="1" />
<rect x="590.80" y="397.80" width="13.70" height="12.70" fill="#f2f2f2" stroke="#a8b0b8" stroke-width="1" />
<circle cx="547.70" cy="406.20" r="2.90" fill="url(#gball)" stroke="none" stroke-width="1" />
<rect x="550.80" y="399.70" width="3.70" height="4.20" fill="url(#gtag)" stroke="#6a6450" stroke-width="1" />
<polyline points="561.50,401.50 561.50,408.80 568.80,408.80 568.80,404.00" fill="none" stroke="#7060c0" stroke-width="1.4" stroke-linejoin="round" />
<circle cx="568.40" cy="401.40" r="2.80" fill="url(#gball)" stroke="none" stroke-width="1" />
<circle cx="579.10" cy="406.20" r="2.90" fill="url(#gball)" stroke="none" stroke-width="1" />
<circle cx="584.10" cy="401.40" r="2.60" fill="#8898b0" stroke="none" stroke-width="1" />
<circle cx="595.00" cy="406.20" r="2.90" fill="url(#gball)" stroke="none" stroke-width="1" />
<path d="M597,401 Q599,398.5 602,401" fill="none" stroke="#e83020" stroke-width="1.6"/>
<ellipse cx="614.20" cy="405.70" rx="4.00" ry="2.20" fill="#f39a20" stroke="none" stroke-width="1" />
<line x1="614.20" y1="400.50" x2="614.20" y2="411.00" stroke="#333" stroke-width="0.9" />
<rect x="616.50" y="399.80" width="4.50" height="3.20" fill="#1020c0" stroke="none" stroke-width="1" />
<ellipse cx="630.00" cy="405.70" rx="4.00" ry="2.20" fill="#f39a20" stroke="none" stroke-width="1" />
<ellipse cx="630.00" cy="405.70" rx="1.60" ry="4.40" fill="#4070d0" stroke="none" stroke-width="1" />
<rect x="632.50" y="399.80" width="4.50" height="3.20" fill="#1020c0" stroke="none" stroke-width="1" />
<rect x="640.30" y="397.80" width="14.20" height="14.00" fill="#e8eef6" stroke="#454545" stroke-width="1.1" />
<circle cx="645.00" cy="407.30" r="2.90" fill="url(#gball)" stroke="none" stroke-width="1" />
<circle cx="650.00" cy="402.00" r="2.60" fill="#2080e0" stroke="none" stroke-width="1" />
<rect x="658.80" y="398.00" width="13.60" height="13.00" fill="#f2f2f2" stroke="#a8b0b8" stroke-width="1" />
<rect x="674.70" y="398.00" width="14.00" height="13.00" fill="#f2f2f2" stroke="#a8b0b8" stroke-width="1" />
<ellipse cx="665.40" cy="406.50" rx="4.30" ry="2.70" fill="none" stroke="#3a80e8" stroke-width="1.1" />
<line x1="660.90" y1="406.50" x2="669.90" y2="406.50" stroke="#333" stroke-width="0.8" />
<line x1="665.40" y1="403.00" x2="665.40" y2="410.00" stroke="#333" stroke-width="0.8" />
<ellipse cx="681.25" cy="406.50" rx="4.30" ry="2.70" fill="none" stroke="#3a80e8" stroke-width="1.1" />
<line x1="676.75" y1="406.50" x2="685.75" y2="406.50" stroke="#333" stroke-width="0.8" />
<line x1="681.25" y1="403.00" x2="681.25" y2="410.00" stroke="#333" stroke-width="0.8" />
<polygon points="667.50,399.50 669.00,399.50 671.50,402.00 671.50,404.50 667.50,404.50" fill="#d8dce2" stroke="#9aa0a8" stroke-width="0.8" />
<rect x="682.50" y="399.80" width="4.50" height="3.20" fill="#1020c0" stroke="none" stroke-width="1" />
<text x="610.50" y="422.90" font-size="8.2" fill="#3a3a3a" font-weight="normal" text-anchor="end" textLength="27.50" lengthAdjust="spacingAndGlyphs" >Bearing</text>
<text x="615.75" y="422.90" font-size="8.2" fill="#3a3a3a" font-weight="normal" text-anchor="start" textLength="33.75" lengthAdjust="spacingAndGlyphs" >149.6185</text>
<text x="610.50" y="433.40" font-size="8.2" fill="#3a3a3a" font-weight="normal" text-anchor="end" textLength="25.00" lengthAdjust="spacingAndGlyphs" >Plunge</text>
<text x="615.75" y="433.40" font-size="8.2" fill="#3a3a3a" font-weight="normal" text-anchor="start" textLength="26.75" lengthAdjust="spacingAndGlyphs" >-8.6491</text>
<text x="610.50" y="443.65" font-size="8.2" fill="#3a3a3a" font-weight="normal" text-anchor="end" textLength="11.75" lengthAdjust="spacingAndGlyphs" >Dip</text>
<text x="615.75" y="443.65" font-size="8.2" fill="#3a3a3a" font-weight="normal" text-anchor="start" textLength="26.75" lengthAdjust="spacingAndGlyphs" >-8.8713</text>
<text x="610.50" y="464.65" font-size="8.2" fill="#3a3a3a" font-weight="normal" text-anchor="end" textLength="63.00" lengthAdjust="spacingAndGlyphs" >Anisotropy factors</text>
<text x="610.50" y="475.40" font-size="8.2" fill="#3a3a3a" font-weight="normal" text-anchor="end" textLength="68.00" lengthAdjust="spacingAndGlyphs" >major / semi-major</text>
<text x="615.75" y="475.40" font-size="8.2" fill="#3a3a3a" font-weight="normal" text-anchor="start" textLength="19.75" lengthAdjust="spacingAndGlyphs" >1.000</text>
<text x="610.50" y="485.90" font-size="8.2" fill="#3a3a3a" font-weight="normal" text-anchor="end" textLength="46.75" lengthAdjust="spacingAndGlyphs" >major / minor</text>
<text x="615.75" y="485.90" font-size="8.2" fill="#3a3a3a" font-weight="normal" text-anchor="start" textLength="19.75" lengthAdjust="spacingAndGlyphs" >1.000</text>
<text x="542.20" y="660.50" font-size="7.4" fill="#3a3a3a" font-weight="normal" text-anchor="start" textLength="92.00" lengthAdjust="spacingAndGlyphs" >Modelling principal directions.</text>
<rect x="0.00" y="664.00" width="1080.00" height="11.00" fill="#eeeeee" stroke="none" stroke-width="1" />
</svg></body></html>
